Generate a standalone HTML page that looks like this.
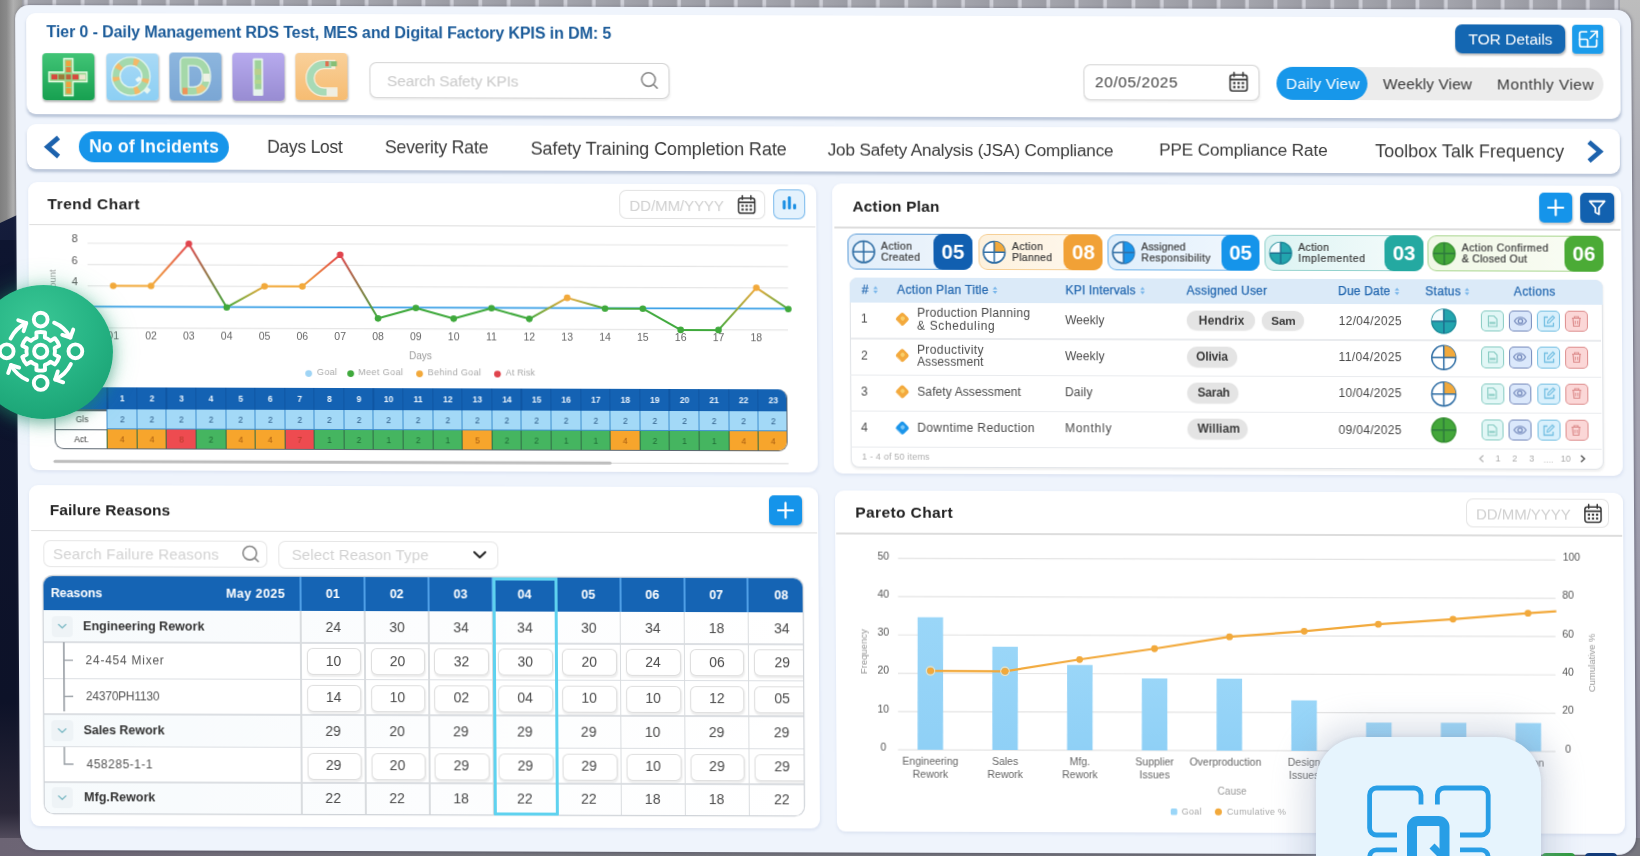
<!DOCTYPE html>
<html><head><meta charset="utf-8"><title>Daily Management</title>
<style>
html,body{margin:0;padding:0}
html{width:1640px;height:856px;overflow:hidden}
body{width:1640px;height:856px;overflow:hidden;position:relative;background:#8a8a90;font-family:"Liberation Sans",sans-serif}
#bg,#fr,#ov{position:absolute;left:0;top:0;width:1640px;height:856px}
#fr{transform-origin:0 0;transform:matrix(1,0.003,0.006,1,0,0);filter:blur(.55px)}
#ov{filter:blur(.55px)}
#bg div,#fr div,#ov div{position:absolute;box-sizing:border-box}
.t{position:absolute;white-space:pre}
svg{position:absolute;left:0;top:0;overflow:visible}
.card{background:#fff;border-radius:9px;box-shadow:0 1px 3px rgba(130,150,190,.16)}
.cs{box-shadow:0 2px 2.5px rgba(115,135,170,.42)}
.hl{background:#dddddd;height:1.3px}
</style></head>
<body>
<div id="bg">
<div style="left:0;top:0;width:1640px;height:14px;background:repeating-linear-gradient(90deg,#a3a4ac 0,#9b9ca4 23px,#cdced6 25px,#cdced6 27px,#a3a4ac 28.4px)"></div>
<div style="left:0;top:0;width:22px;height:230px;background:linear-gradient(90deg,#7f7f7f 0,#8a8a8a 30%,#b0b0b0 60%,#9a9a9a 100%)"></div>
<div style="left:0;top:223px;width:22px;height:633px;background:linear-gradient(180deg,#151d3c 0,#0e1530 20%,#0d1228 70%,#1b1a2c 92%,#6c6474 100%);transform:skewY(-25deg);transform-origin:0 0"></div>
<div style="left:0;top:240px;width:22px;height:616px;background:linear-gradient(180deg,#0e1530 0,#0d1228 75%,#2a2738 93%,#6c6474 100%)"></div>
<div style="left:1620px;top:0;width:20px;height:856px;background:linear-gradient(180deg,#bdbdbd 0,#a9a9b2 20%,#9f9eae 60%,#8b8999 100%)"></div>
<div style="left:0;top:838px;width:1640px;height:18px;background:linear-gradient(90deg,#6c6474 0,#74747c 30%,#77777f 100%)"></div>
</div>
<div id="fr">
<div style="left:14.97px;top:5.46px;width:1616.5px;height:845px;background:#eff4fc;border-radius:14px 14px 18px 20px;box-shadow:0 0 3px rgba(60,60,80,.5)"></div>
<div class="card cs" style="left:25.72px;top:12.52px;width:1594px;height:101.4px;"></div>
<span class="t" style="left:46.36px;top:24.04px;font-size:16px;line-height:16px;color:#1b5b99;font-weight:700;letter-spacing:-0.1px;">Tier 0 - Daily Management RDS Test, MES and Digital Factory KPIS in DM: 5</span>
<div style="left:42.48px;top:52.87px;width:52px;height:47.3px;background:linear-gradient(180deg,#41c476,#17a050);border-radius:4px;box-shadow:0 1px 2px rgba(0,0,0,.25)"><svg width="52" height="47" viewBox="0 0 52 47"><path d="M21.500 5.500h9v13.500h14v9.500h-14v14h-9v-14h-15v-9.500h15z" fill="#93d58c" stroke="#e6fbe2" stroke-width="1.400"/><rect x="23.500" y="7.500" width="5" height="5.500" fill="#f0a23c"/><rect x="23.500" y="14" width="5" height="5" fill="#e07a3c"/><rect x="9" y="21.300" width="6" height="5" fill="#d8483d"/><rect x="16" y="21.300" width="6" height="5" fill="#9a7a3a"/><rect x="23.500" y="21.300" width="5" height="5" fill="#c0603a"/><rect x="30" y="21.300" width="6" height="5" fill="#d8483d"/><rect x="37" y="21.300" width="6" height="5" fill="#ece4cc"/><rect x="23.500" y="28.500" width="5" height="5.500" fill="#efa03c"/><rect x="23.500" y="35" width="5" height="5.500" fill="#e99a3c"/></svg></div>
<div style="left:106.18px;top:52.68px;width:52px;height:47.3px;background:linear-gradient(180deg,#a9d9f5,#8ccff4);border-radius:4px;box-shadow:0 1px 2px rgba(0,0,0,.25)"><svg width="52" height="47" viewBox="0 0 52 47"><path d="M36 33l6.500 5.500" stroke="#e8f6f1" stroke-width="5.500"/><circle cx="24.500" cy="23" r="15" fill="none" stroke="#e3f6ee" stroke-width="9.500"/><circle cx="24.500" cy="23" r="15" fill="none" stroke="#a4d9ad" stroke-width="6.800"/><circle cx="24.500" cy="23" r="15" fill="none" stroke="#f3b868" stroke-width="6.800" stroke-dasharray="5 18 4 9 5 22 4 8 5 200" transform="rotate(-80 24.500 23)"/><path d="M30 27.500l4-3" stroke="#eef8f4" stroke-width="4"/></svg></div>
<div style="left:169.19px;top:52.49px;width:52px;height:47.3px;background:linear-gradient(180deg,#8db6de,#7aa6d4);border-radius:4px;box-shadow:0 1px 2px rgba(0,0,0,.25)"><svg width="52" height="47" viewBox="0 0 52 47"><path d="M15 9h9c8.500 0 13 5.500 13 14.500S32.500 38.500 24 38.500H15z" fill="none" stroke="#e2f3e9" stroke-width="9.500" stroke-linejoin="round"/><path d="M15 9h9c8.500 0 13 5.500 13 14.500S32.500 38.500 24 38.500H15z" fill="none" stroke="#a5d8a9" stroke-width="6.800" stroke-linejoin="round"/><path d="M13 38.500h5" stroke="#f0935a" stroke-width="6.500"/><path d="M27 38c3-.5 5.500-2 7.500-4.500" stroke="#eec37a" stroke-width="6.500" fill="none"/><path d="M37 21v8" stroke="#eef1e4" stroke-width="6.500" fill="none"/></svg></div>
<div style="left:231.89px;top:52.3px;width:52px;height:47.3px;background:linear-gradient(180deg,#b7aaee,#988cd2);border-radius:4px;box-shadow:0 1px 2px rgba(0,0,0,.25)"><svg width="52" height="47" viewBox="0 0 52 47"><rect x="20.500" y="5.500" width="10.200" height="37.500" rx="1" fill="#e6f3ec"/><rect x="22.300" y="7.500" width="6.600" height="29" fill="#9fd29a"/><rect x="22.300" y="16" width="6.600" height="6" fill="#b9cf8c"/><rect x="22.300" y="27" width="6.600" height="4" fill="#b4d68e"/></svg></div>
<div style="left:294.59px;top:52.12px;width:52px;height:47.3px;background:linear-gradient(180deg,#f9d09a,#f6bc72);border-radius:4px;box-shadow:0 1px 2px rgba(0,0,0,.25)"><svg width="52" height="47" viewBox="0 0 52 47"><path d="M40 11.500H28.500a13.800 13.800 0 0 0 0 27.600H42" fill="none" stroke="#f5ecd6" stroke-width="9.500"/><path d="M36 11.500H28.500a13.800 13.800 0 0 0 0 27.600H31" fill="none" stroke="#a7dab6" stroke-width="6.800"/><rect x="31" y="35.700" width="11" height="6.800" fill="#efeee2"/><rect x="30" y="8.300" width="3.500" height="5" fill="#e0704f"/><rect x="35.500" y="8.300" width="6" height="5" fill="#86bf76"/></svg></div>
<div style="left:368.83px;top:60.89px;width:300.2px;height:36.2px;background:#fff;border:1.5px solid #d4d4d4;border-radius:7px;box-shadow:0 1px 2px rgba(0,0,0,.06)"></div>
<span class="t" style="left:386.57px;top:71.57px;font-size:15.5px;line-height:15.5px;color:#c9c9c9;letter-spacing:-0.17px;">Search Safety KPIs</span>
<svg width="1640" height="856"><circle cx="648.03" cy="77.55" r="6.8" fill="none" stroke="#8a8a8a" stroke-width="1.6"/><path d="M653.03 82.55l3.6 3.600" stroke="#8a8a8a" stroke-width="1.600" stroke-linecap="round"/></svg>
<div style="left:1455.18px;top:19.63px;width:109.7px;height:29px;background:#1467b2;border-radius:7px;box-shadow:0 1px 2px rgba(0,0,0,.25)"></div>
<span class="t" style="left:1468.34px;top:27.12px;font-size:15.5px;line-height:15.5px;color:#fff;letter-spacing:-0.01px;">TOR Details</span>
<div style="left:1571.58px;top:19.59px;width:31.9px;height:29px;background:#1b9ceb;border-radius:4px;box-shadow:0 1px 2px rgba(0,0,0,.2)"><svg width="32" height="29" viewBox="0 0 32 29"><g fill="none" stroke="#fff" stroke-width="1.700" stroke-linecap="round" stroke-linejoin="round"><path d="M14.500 7H9.500a2 2 0 0 0-2 2v11a2 2 0 0 0 2 2h13a2 2 0 0 0 2-2v-5"/><path d="M7.500 14.500h6.500a1.500 1.500 0 0 1 1.500 1.500v6"/><path d="M19 6.500h6v6"/><path d="M25 6.500l-7 7"/></g></svg></div>
<div style="left:1082.63px;top:61.05px;width:176.5px;height:36px;background:#fff;border:1.5px solid #d4d4d4;border-radius:7px;box-shadow:0 1px 2px rgba(0,0,0,.06)"></div>
<span class="t" style="left:1094.57px;top:71.24px;font-size:15.5px;line-height:15.5px;color:#444;letter-spacing:0.55px;">20/05/2025</span>
<svg width="1640" height="856"><g transform="translate(1238.13,78.29) scale(1.0)" fill="none" stroke="#383838" stroke-width="1.600"><rect x="-8.500" y="-7" width="17" height="16" rx="2.500"/><path d="M-8.500 -2.500h17" stroke-width="1.8"/><path d="M-4.500 -9.500v4M4.500 -9.500v4" stroke-linecap="round"/><g stroke="none" fill="#383838"><rect x="-5.500" y="0" width="2.400" height="2.200"/><rect x="-1.200" y="0" width="2.400" height="2.200"/><rect x="3.100" y="0" width="2.400" height="2.200"/><rect x="-5.500" y="4" width="2.400" height="2.200"/><rect x="-1.200" y="4" width="2.400" height="2.200"/><rect x="3.100" y="4" width="2.400" height="2.200"/></g></g></svg>
<div style="left:1276.02px;top:62.97px;width:326.6px;height:33px;background:#ececec;border-radius:17px"></div>
<div style="left:1276.02px;top:62.97px;width:91.4px;height:33px;background:#1797ea;border-radius:17px"></div>
<span class="t" style="left:1285.57px;top:71.87px;font-size:15.5px;line-height:15.5px;color:#fff;letter-spacing:0.16px;">Daily View</span>
<span class="t" style="left:1382.57px;top:72.08px;font-size:15.5px;line-height:15.5px;color:#3a3a3a;letter-spacing:0.08px;">Weekly View</span>
<span class="t" style="left:1496.57px;top:72.04px;font-size:15.5px;line-height:15.5px;color:#3a3a3a;letter-spacing:0.42px;">Monthly View</span>
<div class="card cs" style="left:26.26px;top:124.12px;width:1593px;height:45.3px;"></div>
<svg width="1640" height="856"><path d="M57.62 137.35l-11 9.500 11 9.500" fill="none" stroke="#1c62ad" stroke-width="4.800" stroke-linejoin="miter"/></svg>
<div style="left:77.81px;top:131.37px;width:150px;height:30.6px;background:#1695ea;border-radius:16px"></div>
<span class="t" style="left:88.17px;top:138.26px;font-size:17.5px;line-height:17.5px;color:#fff;font-weight:700;letter-spacing:0.24px;">No of Incidents</span>
<span class="t" style="left:266.17px;top:138.23px;font-size:17.5px;line-height:17.5px;color:#3a3a3a;letter-spacing:-0.25px;">Days Lost</span>
<span class="t" style="left:383.97px;top:138.15px;font-size:17.75px;line-height:17.75px;color:#3a3a3a;letter-spacing:-0.25px;">Severity Rate</span>
<span class="t" style="left:529.67px;top:138.18px;font-size:18px;line-height:18px;color:#3a3a3a;letter-spacing:-0.1px;">Safety Training Completion Rate</span>
<span class="t" style="left:826.67px;top:138.57px;font-size:17.25px;line-height:17.25px;color:#3a3a3a;letter-spacing:-0.21px;">Job Safety Analysis (JSA) Compliance</span>
<span class="t" style="left:1158.17px;top:138.47px;font-size:17.25px;line-height:17.25px;color:#3a3a3a;letter-spacing:-0.17px;">PPE Compliance Rate</span>
<span class="t" style="left:1374.17px;top:138.15px;font-size:18px;line-height:18px;color:#3a3a3a;letter-spacing:0.01px;">Toolbox Talk Frequency</span>
<svg width="1640" height="856"><path d="M1588.12 137.22l11 9.500 -11 9.500" fill="none" stroke="#1c62ad" stroke-width="4.800" stroke-linejoin="miter"/></svg>
<div class="card" style="left:26.51px;top:181.92px;width:788.4px;height:288.5px;"></div>
<span class="t" style="left:46.32px;top:195.99px;font-size:15.5px;line-height:15.5px;color:#222;font-weight:700;letter-spacing:0.5px;">Trend Chart</span>
<div class="hl" style="left:27.66px;top:223.72px;width:786.5px;height:1.5px;"></div>
<div style="left:618.37px;top:187.94px;width:145.3px;height:28.8px;background:#fff;border:1.5px solid #e2e2e2;border-radius:7px"></div>
<span class="t" style="left:628.33px;top:195.59px;font-size:15px;line-height:15px;color:#cfcfcf;letter-spacing:-0.06px;">DD/MM/YYYY</span>
<svg width="1640" height="856"><g transform="translate(745.48,202.56) scale(0.95)" fill="none" stroke="#383838" stroke-width="1.600"><rect x="-8.500" y="-7" width="17" height="16" rx="2.500"/><path d="M-8.500 -2.500h17" stroke-width="1.8"/><path d="M-4.500 -9.500v4M4.500 -9.500v4" stroke-linecap="round"/><g stroke="none" fill="#383838"><rect x="-5.500" y="0" width="2.400" height="2.200"/><rect x="-1.200" y="0" width="2.400" height="2.200"/><rect x="3.100" y="0" width="2.400" height="2.200"/><rect x="-5.500" y="4" width="2.400" height="2.200"/><rect x="-1.200" y="4" width="2.400" height="2.200"/><rect x="3.100" y="4" width="2.400" height="2.200"/></g></g></svg>
<div style="left:771.88px;top:187.48px;width:32.6px;height:29.2px;background:#e4f2fd;border:1.5px solid #79b9ec;border-radius:7px"><svg width="30" height="27" viewBox="0 0 30 27"><g fill="#1b8fe3"><rect x="8.500" y="10" width="3" height="9" rx="1.200"/><rect x="13.700" y="6" width="3" height="13" rx="1.200"/><rect x="18.900" y="13.500" width="3" height="5.500" rx="1.200"/></g></svg></div>
<svg width="1640" height="856"><path d="M86.04,243 L786.54,243" stroke="#e6e6e6" stroke-width="1.200"/><path d="M85.91,264.3 L786.41,264.3" stroke="#e6e6e6" stroke-width="1.200"/><path d="M85.79,285.61 L786.29,285.61" stroke="#e6e6e6" stroke-width="1.200"/><path d="M85.53,327.71 L786.03,327.71" stroke="#e6e6e6" stroke-width="1.200"/><path d="M85.66,306.41 L786.16,306.41" stroke="#3aa0e6" stroke-width="1.800"/><defs><linearGradient id="g0" gradientUnits="userSpaceOnUse" x1="111.49" y1="285.56" x2="149.32" y2="285.56"><stop offset="0" stop-color="#f2a93b"/><stop offset="1" stop-color="#f2a93b"/></linearGradient><linearGradient id="g1" gradientUnits="userSpaceOnUse" x1="149.32" y1="285.56" x2="187.4" y2="243.2"><stop offset="0" stop-color="#f2a93b"/><stop offset="1" stop-color="#e0444d"/></linearGradient><linearGradient id="g2" gradientUnits="userSpaceOnUse" x1="187.4" y1="243.2" x2="224.85" y2="306.73"><stop offset="0" stop-color="#e0444d"/><stop offset="1" stop-color="#3fa93c"/></linearGradient><linearGradient id="g3" gradientUnits="userSpaceOnUse" x1="224.85" y1="306.73" x2="262.81" y2="285.56"><stop offset="0" stop-color="#3fa93c"/><stop offset="1" stop-color="#f2a93b"/></linearGradient><linearGradient id="g4" gradientUnits="userSpaceOnUse" x1="262.81" y1="285.56" x2="300.64" y2="285.56"><stop offset="0" stop-color="#f2a93b"/><stop offset="1" stop-color="#f2a93b"/></linearGradient><linearGradient id="g5" gradientUnits="userSpaceOnUse" x1="300.64" y1="285.56" x2="338.66" y2="253.79"><stop offset="0" stop-color="#f2a93b"/><stop offset="1" stop-color="#e0444d"/></linearGradient><linearGradient id="g6" gradientUnits="userSpaceOnUse" x1="338.66" y1="253.79" x2="376.11" y2="317.32"><stop offset="0" stop-color="#e0444d"/><stop offset="1" stop-color="#3fa93c"/></linearGradient><linearGradient id="g7" gradientUnits="userSpaceOnUse" x1="376.11" y1="317.32" x2="414" y2="306.73"><stop offset="0" stop-color="#3fa93c"/><stop offset="1" stop-color="#3fa93c"/></linearGradient><linearGradient id="g8" gradientUnits="userSpaceOnUse" x1="414" y1="306.73" x2="451.77" y2="317.32"><stop offset="0" stop-color="#3fa93c"/><stop offset="1" stop-color="#3fa93c"/></linearGradient><linearGradient id="g9" gradientUnits="userSpaceOnUse" x1="451.77" y1="317.32" x2="489.66" y2="306.73"><stop offset="0" stop-color="#3fa93c"/><stop offset="1" stop-color="#3fa93c"/></linearGradient><linearGradient id="g10" gradientUnits="userSpaceOnUse" x1="489.66" y1="306.73" x2="527.43" y2="317.32"><stop offset="0" stop-color="#3fa93c"/><stop offset="1" stop-color="#3fa93c"/></linearGradient><linearGradient id="g11" gradientUnits="userSpaceOnUse" x1="527.43" y1="317.32" x2="565.38" y2="296.14"><stop offset="0" stop-color="#3fa93c"/><stop offset="1" stop-color="#f2a93b"/></linearGradient><linearGradient id="g12" gradientUnits="userSpaceOnUse" x1="565.38" y1="296.14" x2="603.15" y2="306.73"><stop offset="0" stop-color="#f2a93b"/><stop offset="1" stop-color="#3fa93c"/></linearGradient><linearGradient id="g13" gradientUnits="userSpaceOnUse" x1="603.15" y1="306.73" x2="640.98" y2="306.73"><stop offset="0" stop-color="#3fa93c"/><stop offset="1" stop-color="#3fa93c"/></linearGradient><linearGradient id="g14" gradientUnits="userSpaceOnUse" x1="640.98" y1="306.73" x2="678.68" y2="327.91"><stop offset="0" stop-color="#3fa93c"/><stop offset="1" stop-color="#3fa93c"/></linearGradient><linearGradient id="g15" gradientUnits="userSpaceOnUse" x1="678.68" y1="327.91" x2="716.51" y2="327.91"><stop offset="0" stop-color="#3fa93c"/><stop offset="1" stop-color="#3fa93c"/></linearGradient><linearGradient id="g16" gradientUnits="userSpaceOnUse" x1="716.51" y1="327.91" x2="754.6" y2="285.56"><stop offset="0" stop-color="#3fa93c"/><stop offset="1" stop-color="#f2a93b"/></linearGradient><linearGradient id="g17" gradientUnits="userSpaceOnUse" x1="754.6" y1="285.56" x2="786.46" y2="306.73"><stop offset="0" stop-color="#f2a93b"/><stop offset="1" stop-color="#3fa93c"/></linearGradient></defs><path d="M111.49,285.56 L149.32,285.56" stroke="#f2a93b" stroke-width="2"/><path d="M149.32,285.56 L187.4,243.2" stroke="url(#g1)" stroke-width="2"/><path d="M187.4,243.2 L224.85,306.73" stroke="url(#g2)" stroke-width="2"/><path d="M224.85,306.73 L262.81,285.56" stroke="url(#g3)" stroke-width="2"/><path d="M262.81,285.56 L300.64,285.56" stroke="#f2a93b" stroke-width="2"/><path d="M300.64,285.56 L338.66,253.79" stroke="url(#g5)" stroke-width="2"/><path d="M338.66,253.79 L376.11,317.32" stroke="url(#g6)" stroke-width="2"/><path d="M376.11,317.32 L414,306.73" stroke="url(#g7)" stroke-width="2"/><path d="M414,306.73 L451.77,317.32" stroke="url(#g8)" stroke-width="2"/><path d="M451.77,317.32 L489.66,306.73" stroke="url(#g9)" stroke-width="2"/><path d="M489.66,306.73 L527.43,317.32" stroke="url(#g10)" stroke-width="2"/><path d="M527.43,317.32 L565.38,296.14" stroke="url(#g11)" stroke-width="2"/><path d="M565.38,296.14 L603.15,306.73" stroke="url(#g12)" stroke-width="2"/><path d="M603.15,306.73 L640.98,306.73" stroke="#3fa93c" stroke-width="2"/><path d="M640.98,306.73 L678.68,327.91" stroke="url(#g14)" stroke-width="2"/><path d="M678.68,327.91 L716.51,327.91" stroke="#3fa93c" stroke-width="2"/><path d="M716.51,327.91 L754.6,285.56" stroke="url(#g16)" stroke-width="2"/><path d="M754.6,285.56 L786.46,306.73" stroke="url(#g17)" stroke-width="2"/><circle cx="111.49" cy="285.56" r="3.300" fill="#f2a93b"/><circle cx="149.32" cy="285.56" r="3.300" fill="#f2a93b"/><circle cx="187.4" cy="243.2" r="3.300" fill="#e0444d"/><circle cx="224.85" cy="306.73" r="3.300" fill="#3fa93c"/><circle cx="262.81" cy="285.56" r="3.300" fill="#f2a93b"/><circle cx="300.64" cy="285.56" r="3.300" fill="#f2a93b"/><circle cx="338.66" cy="253.79" r="3.300" fill="#e0444d"/><circle cx="376.11" cy="317.32" r="3.300" fill="#3fa93c"/><circle cx="414" cy="306.73" r="3.300" fill="#3fa93c"/><circle cx="451.77" cy="317.32" r="3.300" fill="#3fa93c"/><circle cx="489.66" cy="306.73" r="3.300" fill="#3fa93c"/><circle cx="527.43" cy="317.32" r="3.300" fill="#3fa93c"/><circle cx="565.38" cy="296.14" r="3.300" fill="#f2a93b"/><circle cx="603.15" cy="306.73" r="3.300" fill="#3fa93c"/><circle cx="640.98" cy="306.73" r="3.300" fill="#3fa93c"/><circle cx="678.68" cy="327.91" r="3.300" fill="#3fa93c"/><circle cx="716.51" cy="327.91" r="3.300" fill="#3fa93c"/><circle cx="754.6" cy="285.56" r="3.300" fill="#f2a93b"/><circle cx="786.46" cy="306.73" r="3.300" fill="#3fa93c"/><circle cx="306.46" cy="372.61" r="3.400" fill="#9fd4f5"/><circle cx="348.46" cy="372.61" r="3.400" fill="#3fa93c"/><circle cx="417.36" cy="372.61" r="3.400" fill="#f2a93b"/><circle cx="495.26" cy="372.61" r="3.400" fill="#e0444d"/><path d="M52.23,461.34 L785.73,461.34" stroke="#dedede" stroke-width="1.400"/><path d="M52.23,461.34 L607.23,461.34" stroke="#bdbdbd" stroke-width="3" stroke-linecap="round"/></svg>
<span class="t" style="left:70.14px;top:233.27px;font-size:11px;line-height:11px;color:#555;">8</span>
<span class="t" style="left:70.01px;top:254.57px;font-size:11px;line-height:11px;color:#555;">6</span>
<span class="t" style="left:69.88px;top:275.87px;font-size:11px;line-height:11px;color:#555;">4</span>
<span class="t" style="left:50.91px;top:281.85px;font-size:9.5px;line-height:10px;color:#9a9a9a;transform:translate(-50%,-50%) rotate(-90deg)">Count</span>
<span class="t" style="left:105.37px;top:330.32px;font-size:10.5px;line-height:10.5px;color:#666;">01</span>
<span class="t" style="left:143.2px;top:330.32px;font-size:10.5px;line-height:10.5px;color:#666;">02</span>
<span class="t" style="left:181.03px;top:330.32px;font-size:10.5px;line-height:10.5px;color:#666;">03</span>
<span class="t" style="left:218.86px;top:330.32px;font-size:10.5px;line-height:10.5px;color:#666;">04</span>
<span class="t" style="left:256.69px;top:330.32px;font-size:10.5px;line-height:10.5px;color:#666;">05</span>
<span class="t" style="left:294.52px;top:330.32px;font-size:10.5px;line-height:10.5px;color:#666;">06</span>
<span class="t" style="left:332.35px;top:330.32px;font-size:10.5px;line-height:10.5px;color:#666;">07</span>
<span class="t" style="left:370.18px;top:330.32px;font-size:10.5px;line-height:10.5px;color:#666;">08</span>
<span class="t" style="left:408.01px;top:330.32px;font-size:10.5px;line-height:10.5px;color:#666;">09</span>
<span class="t" style="left:445.84px;top:330.32px;font-size:10.5px;line-height:10.5px;color:#666;">10</span>
<span class="t" style="left:484.06px;top:330.32px;font-size:10.5px;line-height:10.5px;color:#666;">11</span>
<span class="t" style="left:521.5px;top:330.32px;font-size:10.5px;line-height:10.5px;color:#666;">12</span>
<span class="t" style="left:559.33px;top:330.32px;font-size:10.5px;line-height:10.5px;color:#666;">13</span>
<span class="t" style="left:597.16px;top:330.32px;font-size:10.5px;line-height:10.5px;color:#666;">14</span>
<span class="t" style="left:634.99px;top:330.32px;font-size:10.5px;line-height:10.5px;color:#666;">15</span>
<span class="t" style="left:672.82px;top:330.32px;font-size:10.5px;line-height:10.5px;color:#666;">16</span>
<span class="t" style="left:710.65px;top:330.32px;font-size:10.5px;line-height:10.5px;color:#666;">17</span>
<span class="t" style="left:748.48px;top:330.32px;font-size:10.5px;line-height:10.5px;color:#666;">18</span>
<span class="t" style="left:407px;top:350.06px;font-size:10px;line-height:10px;color:#999;">Days</span>
<span class="t" style="left:314.8px;top:367.34px;font-size:9px;line-height:9px;color:#a8a8a8;letter-spacing:0.33px;">Goal</span>
<span class="t" style="left:356px;top:367.42px;font-size:9px;line-height:9px;color:#a8a8a8;letter-spacing:0.41px;">Meet Goal</span>
<span class="t" style="left:425.6px;top:367.41px;font-size:9px;line-height:9px;color:#a8a8a8;letter-spacing:0.37px;">Behind Goal</span>
<span class="t" style="left:503.6px;top:367.38px;font-size:9px;line-height:9px;color:#a8a8a8;letter-spacing:0.11px;">At Risk</span>
<div style="left:52.18px;top:387.04px;width:733.1px;height:62.2px;border-radius:0 9px 9px 9px;overflow:hidden;background:#fff;border:1.5px solid #5c6670;border-top:none"><div style="left:-1.5px;top:0;width:733.1px;height:22.4px;background:#1462b3"></div><div style="left:-1.5px;top:22.4px;width:52.5px;height:1.5px;background:#5c6670"></div><div style="left:-1.5px;top:41.7px;width:52.5px;height:1.5px;background:#5c6670"></div><div style="left:51px;top:22.4px;width:29.59px;height:20px;background:#a3d9f7;border-left:1.4px solid #3f8fcf;border-bottom:1.400px solid #3f8fcf"></div><div style="left:51px;top:42.4px;width:29.59px;height:19.8px;background:#f7a52c;border-left:1.4px solid #2f6b45"></div><div style="left:80.59px;top:22.4px;width:29.59px;height:20px;background:#a3d9f7;border-left:1.4px solid #3f8fcf;border-bottom:1.400px solid #3f8fcf"></div><div style="left:80.59px;top:42.4px;width:29.59px;height:19.8px;background:#f7a52c;border-left:1.4px solid #2f6b45"></div><div style="left:80.59px;top:0;width:1.2px;height:22.4px;background:#0f56a3"></div><div style="left:110.18px;top:22.4px;width:29.59px;height:20px;background:#a3d9f7;border-left:1.4px solid #3f8fcf;border-bottom:1.400px solid #3f8fcf"></div><div style="left:110.18px;top:42.4px;width:29.59px;height:19.8px;background:#ee4b50;border-left:1.4px solid #2f6b45"></div><div style="left:110.18px;top:0;width:1.2px;height:22.4px;background:#0f56a3"></div><div style="left:139.77px;top:22.4px;width:29.59px;height:20px;background:#a3d9f7;border-left:1.4px solid #3f8fcf;border-bottom:1.400px solid #3f8fcf"></div><div style="left:139.77px;top:42.4px;width:29.59px;height:19.8px;background:#45b560;border-left:1.4px solid #2f6b45"></div><div style="left:139.77px;top:0;width:1.2px;height:22.4px;background:#0f56a3"></div><div style="left:169.37px;top:22.4px;width:29.59px;height:20px;background:#a3d9f7;border-left:1.4px solid #3f8fcf;border-bottom:1.400px solid #3f8fcf"></div><div style="left:169.37px;top:42.4px;width:29.59px;height:19.8px;background:#f7a52c;border-left:1.4px solid #2f6b45"></div><div style="left:169.37px;top:0;width:1.2px;height:22.4px;background:#0f56a3"></div><div style="left:198.96px;top:22.4px;width:29.59px;height:20px;background:#a3d9f7;border-left:1.4px solid #3f8fcf;border-bottom:1.400px solid #3f8fcf"></div><div style="left:198.96px;top:42.4px;width:29.59px;height:19.8px;background:#f7a52c;border-left:1.4px solid #2f6b45"></div><div style="left:198.96px;top:0;width:1.2px;height:22.4px;background:#0f56a3"></div><div style="left:228.55px;top:22.4px;width:29.59px;height:20px;background:#a3d9f7;border-left:1.4px solid #3f8fcf;border-bottom:1.400px solid #3f8fcf"></div><div style="left:228.55px;top:42.4px;width:29.59px;height:19.8px;background:#ee4b50;border-left:1.4px solid #2f6b45"></div><div style="left:228.55px;top:0;width:1.2px;height:22.4px;background:#0f56a3"></div><div style="left:258.14px;top:22.4px;width:29.59px;height:20px;background:#a3d9f7;border-left:1.4px solid #3f8fcf;border-bottom:1.400px solid #3f8fcf"></div><div style="left:258.14px;top:42.4px;width:29.59px;height:19.8px;background:#45b560;border-left:1.4px solid #2f6b45"></div><div style="left:258.14px;top:0;width:1.2px;height:22.4px;background:#0f56a3"></div><div style="left:287.73px;top:22.4px;width:29.59px;height:20px;background:#a3d9f7;border-left:1.4px solid #3f8fcf;border-bottom:1.400px solid #3f8fcf"></div><div style="left:287.73px;top:42.4px;width:29.59px;height:19.8px;background:#45b560;border-left:1.4px solid #2f6b45"></div><div style="left:287.73px;top:0;width:1.2px;height:22.4px;background:#0f56a3"></div><div style="left:317.32px;top:22.4px;width:29.59px;height:20px;background:#a3d9f7;border-left:1.4px solid #3f8fcf;border-bottom:1.400px solid #3f8fcf"></div><div style="left:317.32px;top:42.4px;width:29.59px;height:19.8px;background:#45b560;border-left:1.4px solid #2f6b45"></div><div style="left:317.32px;top:0;width:1.2px;height:22.4px;background:#0f56a3"></div><div style="left:346.91px;top:22.4px;width:29.59px;height:20px;background:#a3d9f7;border-left:1.4px solid #3f8fcf;border-bottom:1.400px solid #3f8fcf"></div><div style="left:346.91px;top:42.4px;width:29.59px;height:19.8px;background:#45b560;border-left:1.4px solid #2f6b45"></div><div style="left:346.91px;top:0;width:1.2px;height:22.4px;background:#0f56a3"></div><div style="left:376.5px;top:22.4px;width:29.59px;height:20px;background:#a3d9f7;border-left:1.4px solid #3f8fcf;border-bottom:1.400px solid #3f8fcf"></div><div style="left:376.5px;top:42.4px;width:29.59px;height:19.8px;background:#45b560;border-left:1.4px solid #2f6b45"></div><div style="left:376.5px;top:0;width:1.2px;height:22.4px;background:#0f56a3"></div><div style="left:406.1px;top:22.4px;width:29.59px;height:20px;background:#a3d9f7;border-left:1.4px solid #3f8fcf;border-bottom:1.400px solid #3f8fcf"></div><div style="left:406.1px;top:42.4px;width:29.59px;height:19.8px;background:#f7a52c;border-left:1.4px solid #2f6b45"></div><div style="left:406.1px;top:0;width:1.2px;height:22.4px;background:#0f56a3"></div><div style="left:435.69px;top:22.4px;width:29.59px;height:20px;background:#a3d9f7;border-left:1.4px solid #3f8fcf;border-bottom:1.400px solid #3f8fcf"></div><div style="left:435.69px;top:42.4px;width:29.59px;height:19.8px;background:#45b560;border-left:1.4px solid #2f6b45"></div><div style="left:435.69px;top:0;width:1.2px;height:22.4px;background:#0f56a3"></div><div style="left:465.28px;top:22.4px;width:29.59px;height:20px;background:#a3d9f7;border-left:1.4px solid #3f8fcf;border-bottom:1.400px solid #3f8fcf"></div><div style="left:465.28px;top:42.4px;width:29.59px;height:19.8px;background:#45b560;border-left:1.4px solid #2f6b45"></div><div style="left:465.28px;top:0;width:1.2px;height:22.4px;background:#0f56a3"></div><div style="left:494.87px;top:22.4px;width:29.59px;height:20px;background:#a3d9f7;border-left:1.4px solid #3f8fcf;border-bottom:1.400px solid #3f8fcf"></div><div style="left:494.87px;top:42.4px;width:29.59px;height:19.8px;background:#45b560;border-left:1.4px solid #2f6b45"></div><div style="left:494.87px;top:0;width:1.2px;height:22.4px;background:#0f56a3"></div><div style="left:524.46px;top:22.4px;width:29.59px;height:20px;background:#a3d9f7;border-left:1.4px solid #3f8fcf;border-bottom:1.400px solid #3f8fcf"></div><div style="left:524.46px;top:42.4px;width:29.59px;height:19.8px;background:#45b560;border-left:1.4px solid #2f6b45"></div><div style="left:524.46px;top:0;width:1.2px;height:22.4px;background:#0f56a3"></div><div style="left:554.05px;top:22.4px;width:29.59px;height:20px;background:#a3d9f7;border-left:1.4px solid #3f8fcf;border-bottom:1.400px solid #3f8fcf"></div><div style="left:554.05px;top:42.4px;width:29.59px;height:19.8px;background:#f7a52c;border-left:1.4px solid #2f6b45"></div><div style="left:554.05px;top:0;width:1.2px;height:22.4px;background:#0f56a3"></div><div style="left:583.64px;top:22.4px;width:29.59px;height:20px;background:#a3d9f7;border-left:1.4px solid #3f8fcf;border-bottom:1.400px solid #3f8fcf"></div><div style="left:583.64px;top:42.4px;width:29.59px;height:19.8px;background:#45b560;border-left:1.4px solid #2f6b45"></div><div style="left:583.64px;top:0;width:1.2px;height:22.4px;background:#0f56a3"></div><div style="left:613.23px;top:22.4px;width:29.59px;height:20px;background:#a3d9f7;border-left:1.4px solid #3f8fcf;border-bottom:1.400px solid #3f8fcf"></div><div style="left:613.23px;top:42.4px;width:29.59px;height:19.8px;background:#45b560;border-left:1.4px solid #2f6b45"></div><div style="left:613.23px;top:0;width:1.2px;height:22.4px;background:#0f56a3"></div><div style="left:642.83px;top:22.4px;width:29.59px;height:20px;background:#a3d9f7;border-left:1.4px solid #3f8fcf;border-bottom:1.400px solid #3f8fcf"></div><div style="left:642.83px;top:42.4px;width:29.59px;height:19.8px;background:#45b560;border-left:1.4px solid #2f6b45"></div><div style="left:642.83px;top:0;width:1.2px;height:22.4px;background:#0f56a3"></div><div style="left:672.42px;top:22.4px;width:29.59px;height:20px;background:#a3d9f7;border-left:1.4px solid #3f8fcf;border-bottom:1.400px solid #3f8fcf"></div><div style="left:672.42px;top:42.4px;width:29.59px;height:19.8px;background:#f7a52c;border-left:1.4px solid #2f6b45"></div><div style="left:672.42px;top:0;width:1.2px;height:22.4px;background:#0f56a3"></div><div style="left:702.01px;top:22.4px;width:29.59px;height:20px;background:#a3d9f7;border-left:1.4px solid #3f8fcf;border-bottom:1.400px solid #3f8fcf"></div><div style="left:702.01px;top:42.4px;width:29.59px;height:19.8px;background:#f7a52c;border-left:1.4px solid #2f6b45"></div><div style="left:702.01px;top:0;width:1.2px;height:22.4px;background:#0f56a3"></div><div style="left:51px;top:0;width:1.4px;height:22.4px;background:#0f4f98"></div></div>
<span class="t" style="left:117.56px;top:394.19px;font-size:8.5px;line-height:8.5px;color:#e8f2fb;font-weight:700;">1</span>
<span class="t" style="left:117.44px;top:415.39px;font-size:8.5px;line-height:8.5px;color:#2c5a85;">2</span>
<span class="t" style="left:117.32px;top:435.39px;font-size:8.5px;line-height:8.5px;color:#a55a10;">4</span>
<span class="t" style="left:147.15px;top:394.19px;font-size:8.5px;line-height:8.5px;color:#e8f2fb;font-weight:700;">2</span>
<span class="t" style="left:147.03px;top:415.39px;font-size:8.5px;line-height:8.5px;color:#2c5a85;">2</span>
<span class="t" style="left:146.91px;top:435.39px;font-size:8.5px;line-height:8.5px;color:#a55a10;">4</span>
<span class="t" style="left:176.75px;top:394.19px;font-size:8.5px;line-height:8.5px;color:#e8f2fb;font-weight:700;">3</span>
<span class="t" style="left:176.62px;top:415.39px;font-size:8.5px;line-height:8.5px;color:#2c5a85;">2</span>
<span class="t" style="left:176.5px;top:435.39px;font-size:8.5px;line-height:8.5px;color:#b23a2a;">8</span>
<span class="t" style="left:206.34px;top:394.19px;font-size:8.5px;line-height:8.5px;color:#e8f2fb;font-weight:700;">4</span>
<span class="t" style="left:206.21px;top:415.39px;font-size:8.5px;line-height:8.5px;color:#2c5a85;">2</span>
<span class="t" style="left:206.09px;top:435.39px;font-size:8.5px;line-height:8.5px;color:#1f6b36;">2</span>
<span class="t" style="left:235.93px;top:394.19px;font-size:8.5px;line-height:8.5px;color:#e8f2fb;font-weight:700;">5</span>
<span class="t" style="left:235.8px;top:415.39px;font-size:8.5px;line-height:8.5px;color:#2c5a85;">2</span>
<span class="t" style="left:235.68px;top:435.39px;font-size:8.5px;line-height:8.5px;color:#a55a10;">4</span>
<span class="t" style="left:265.52px;top:394.19px;font-size:8.5px;line-height:8.5px;color:#e8f2fb;font-weight:700;">6</span>
<span class="t" style="left:265.39px;top:415.39px;font-size:8.5px;line-height:8.5px;color:#2c5a85;">2</span>
<span class="t" style="left:265.27px;top:435.39px;font-size:8.5px;line-height:8.5px;color:#a55a10;">4</span>
<span class="t" style="left:295.11px;top:394.19px;font-size:8.5px;line-height:8.5px;color:#e8f2fb;font-weight:700;">7</span>
<span class="t" style="left:294.98px;top:415.39px;font-size:8.5px;line-height:8.5px;color:#2c5a85;">2</span>
<span class="t" style="left:294.86px;top:435.39px;font-size:8.5px;line-height:8.5px;color:#b23a2a;">7</span>
<span class="t" style="left:324.7px;top:394.19px;font-size:8.5px;line-height:8.5px;color:#e8f2fb;font-weight:700;">8</span>
<span class="t" style="left:324.58px;top:415.39px;font-size:8.5px;line-height:8.5px;color:#2c5a85;">2</span>
<span class="t" style="left:324.46px;top:435.39px;font-size:8.5px;line-height:8.5px;color:#1f6b36;">1</span>
<span class="t" style="left:354.29px;top:394.19px;font-size:8.5px;line-height:8.5px;color:#e8f2fb;font-weight:700;">9</span>
<span class="t" style="left:354.17px;top:415.39px;font-size:8.5px;line-height:8.5px;color:#2c5a85;">2</span>
<span class="t" style="left:354.05px;top:435.39px;font-size:8.5px;line-height:8.5px;color:#1f6b36;">2</span>
<span class="t" style="left:381.52px;top:394.19px;font-size:8.5px;line-height:8.5px;color:#e8f2fb;font-weight:700;">10</span>
<span class="t" style="left:383.76px;top:415.39px;font-size:8.5px;line-height:8.5px;color:#2c5a85;">2</span>
<span class="t" style="left:383.64px;top:435.39px;font-size:8.5px;line-height:8.5px;color:#1f6b36;">1</span>
<span class="t" style="left:411.34px;top:394.19px;font-size:8.5px;line-height:8.5px;color:#e8f2fb;font-weight:700;">11</span>
<span class="t" style="left:413.35px;top:415.39px;font-size:8.5px;line-height:8.5px;color:#2c5a85;">2</span>
<span class="t" style="left:413.23px;top:435.39px;font-size:8.5px;line-height:8.5px;color:#1f6b36;">2</span>
<span class="t" style="left:440.7px;top:394.19px;font-size:8.5px;line-height:8.5px;color:#e8f2fb;font-weight:700;">12</span>
<span class="t" style="left:442.94px;top:415.39px;font-size:8.5px;line-height:8.5px;color:#2c5a85;">2</span>
<span class="t" style="left:442.82px;top:435.39px;font-size:8.5px;line-height:8.5px;color:#1f6b36;">1</span>
<span class="t" style="left:470.29px;top:394.19px;font-size:8.5px;line-height:8.5px;color:#e8f2fb;font-weight:700;">13</span>
<span class="t" style="left:472.53px;top:415.39px;font-size:8.5px;line-height:8.5px;color:#2c5a85;">2</span>
<span class="t" style="left:472.41px;top:435.39px;font-size:8.5px;line-height:8.5px;color:#a55a10;">5</span>
<span class="t" style="left:499.88px;top:394.19px;font-size:8.5px;line-height:8.5px;color:#e8f2fb;font-weight:700;">14</span>
<span class="t" style="left:502.12px;top:415.39px;font-size:8.5px;line-height:8.5px;color:#2c5a85;">2</span>
<span class="t" style="left:502px;top:435.39px;font-size:8.5px;line-height:8.5px;color:#1f6b36;">2</span>
<span class="t" style="left:529.47px;top:394.19px;font-size:8.5px;line-height:8.5px;color:#e8f2fb;font-weight:700;">15</span>
<span class="t" style="left:531.71px;top:415.39px;font-size:8.5px;line-height:8.5px;color:#2c5a85;">2</span>
<span class="t" style="left:531.59px;top:435.39px;font-size:8.5px;line-height:8.5px;color:#1f6b36;">2</span>
<span class="t" style="left:559.07px;top:394.19px;font-size:8.5px;line-height:8.5px;color:#e8f2fb;font-weight:700;">16</span>
<span class="t" style="left:561.31px;top:415.39px;font-size:8.5px;line-height:8.5px;color:#2c5a85;">2</span>
<span class="t" style="left:561.19px;top:435.39px;font-size:8.5px;line-height:8.5px;color:#1f6b36;">1</span>
<span class="t" style="left:588.66px;top:394.19px;font-size:8.5px;line-height:8.5px;color:#e8f2fb;font-weight:700;">17</span>
<span class="t" style="left:590.9px;top:415.39px;font-size:8.5px;line-height:8.5px;color:#2c5a85;">2</span>
<span class="t" style="left:590.78px;top:435.39px;font-size:8.5px;line-height:8.5px;color:#1f6b36;">1</span>
<span class="t" style="left:618.25px;top:394.19px;font-size:8.5px;line-height:8.5px;color:#e8f2fb;font-weight:700;">18</span>
<span class="t" style="left:620.49px;top:415.39px;font-size:8.5px;line-height:8.5px;color:#2c5a85;">2</span>
<span class="t" style="left:620.37px;top:435.39px;font-size:8.5px;line-height:8.5px;color:#a55a10;">4</span>
<span class="t" style="left:647.84px;top:394.19px;font-size:8.5px;line-height:8.5px;color:#e8f2fb;font-weight:700;">19</span>
<span class="t" style="left:650.08px;top:415.39px;font-size:8.5px;line-height:8.5px;color:#2c5a85;">2</span>
<span class="t" style="left:649.96px;top:435.39px;font-size:8.5px;line-height:8.5px;color:#1f6b36;">2</span>
<span class="t" style="left:677.43px;top:394.19px;font-size:8.5px;line-height:8.5px;color:#e8f2fb;font-weight:700;">20</span>
<span class="t" style="left:679.67px;top:415.39px;font-size:8.5px;line-height:8.5px;color:#2c5a85;">2</span>
<span class="t" style="left:679.55px;top:435.39px;font-size:8.5px;line-height:8.5px;color:#1f6b36;">1</span>
<span class="t" style="left:707.02px;top:394.19px;font-size:8.5px;line-height:8.5px;color:#e8f2fb;font-weight:700;">21</span>
<span class="t" style="left:709.26px;top:415.39px;font-size:8.5px;line-height:8.5px;color:#2c5a85;">2</span>
<span class="t" style="left:709.14px;top:435.39px;font-size:8.5px;line-height:8.5px;color:#1f6b36;">1</span>
<span class="t" style="left:736.61px;top:394.19px;font-size:8.5px;line-height:8.5px;color:#e8f2fb;font-weight:700;">22</span>
<span class="t" style="left:738.85px;top:415.39px;font-size:8.5px;line-height:8.5px;color:#2c5a85;">2</span>
<span class="t" style="left:738.73px;top:435.39px;font-size:8.5px;line-height:8.5px;color:#a55a10;">4</span>
<span class="t" style="left:766.2px;top:394.19px;font-size:8.5px;line-height:8.5px;color:#e8f2fb;font-weight:700;">23</span>
<span class="t" style="left:768.44px;top:415.39px;font-size:8.5px;line-height:8.5px;color:#2c5a85;">2</span>
<span class="t" style="left:768.32px;top:435.39px;font-size:8.5px;line-height:8.5px;color:#a55a10;">4</span>
<span class="t" style="left:73.13px;top:415.02px;font-size:8.5px;line-height:8.5px;color:#444;">Gls</span>
<span class="t" style="left:71.56px;top:434.82px;font-size:8.5px;line-height:8.5px;color:#333;">Act.</span>
<div class="card" style="left:831.41px;top:181.31px;width:788.5px;height:290.2px;"></div>
<span class="t" style="left:851.13px;top:195.67px;font-size:15.5px;line-height:15.5px;color:#222;font-weight:700;letter-spacing:0.19px;">Action Plan</span>
<div class="hl" style="left:832.66px;top:224px;width:786.5px;height:1.5px;"></div>
<div style="left:1538.07px;top:187.59px;width:33.4px;height:30px;background:#1594ea;border-radius:5px;box-shadow:0 1px 2px rgba(0,0,0,.2)"><svg width="33" height="30" viewBox="0 0 33 30"><path d="M16.500 7.500v15M9 15h15" stroke="#fff" stroke-width="2.200" stroke-linecap="round"/></svg></div>
<div style="left:1578.87px;top:187.66px;width:33.8px;height:30px;background:#1261af;border-radius:5px;box-shadow:0 1px 2px rgba(0,0,0,.2)"><svg width="34" height="30" viewBox="0 0 34 30"><path d="M9.500 8.500h15l-5.700 6.500v6.500l-3.600-2v-4.500z" fill="none" stroke="#fff" stroke-width="1.800" stroke-linejoin="round"/></svg></div>
<div style="left:846.11px;top:231.16px;width:124.5px;height:35.8px;background:linear-gradient(90deg,#e2eefa,#eef5fc);border:1.5px solid #5f9ed8;border-radius:9px"></div>
<div style="left:931.82px;top:230.6px;width:39.1px;height:36.4px;background:#115fb0;border-radius:9px"></div>
<span class="t" style="left:940.06px;top:238.8px;font-size:20.5px;line-height:20.5px;color:#fff;font-weight:700;">05</span>
<svg width="1640" height="856"><g transform="translate(862.2,249.21)"><circle r="10.8" fill="#eef6fd" stroke="#2e6da4" stroke-width="1.500"/><path d="M-10.8 0H10.8M0 -10.8V10.8" stroke="#2e6da4" stroke-width="1.500"/></g></svg>
<span class="t" style="left:879.57px;top:238.3px;font-size:10.5px;line-height:10.5px;color:#3a3a3a;letter-spacing:0.36px;-webkit-text-stroke:.2px #3a3a3a;">Action</span>
<span class="t" style="left:879.51px;top:249.1px;font-size:10.5px;line-height:10.5px;color:#3a3a3a;letter-spacing:0.27px;-webkit-text-stroke:.2px #3a3a3a;">Created</span>
<div style="left:976.61px;top:231.17px;width:124.5px;height:35.8px;background:linear-gradient(90deg,#fdf1dd,#fef8ee);border:1.5px solid #f6cf95;border-radius:9px"></div>
<div style="left:1062.32px;top:230.61px;width:39.1px;height:36.4px;background:#f1a136;border-radius:9px"></div>
<span class="t" style="left:1070.56px;top:238.81px;font-size:20.5px;line-height:20.5px;color:#fff;font-weight:700;">08</span>
<svg width="1640" height="856"><g transform="translate(992.7,249.22)"><circle r="10.8" fill="#fff" stroke="#2e6da4" stroke-width="1.500"/><path d="M0 0V-10.8A10.8 10.8 0 0 1 10.8 0z" fill="#f2a93b"/><path d="M-10.8 0H10.8M0 -10.8V10.8" stroke="#2e6da4" stroke-width="1.500"/></g></svg>
<span class="t" style="left:1010.57px;top:238.3px;font-size:10.5px;line-height:10.5px;color:#3a3a3a;letter-spacing:0.36px;-webkit-text-stroke:.2px #3a3a3a;">Action</span>
<span class="t" style="left:1010.51px;top:249.1px;font-size:10.5px;line-height:10.5px;color:#3a3a3a;letter-spacing:0.24px;-webkit-text-stroke:.2px #3a3a3a;">Planned</span>
<div style="left:1106.21px;top:231.18px;width:151.6px;height:35.8px;background:linear-gradient(90deg,#dfeefb,#f2f8fe);border:1.5px solid #6fb3ea;border-radius:9px"></div>
<div style="left:1219.82px;top:230.54px;width:38.3px;height:36.4px;background:#1594ea;border-radius:9px"></div>
<span class="t" style="left:1227.66px;top:238.74px;font-size:20.5px;line-height:20.5px;color:#fff;font-weight:700;">05</span>
<svg width="1640" height="856"><g transform="translate(1122,249.23)"><circle r="10.8" fill="#eef6fd" stroke="#2e6da4" stroke-width="1.500"/><path d="M0 -10.8A10.8 10.8 0 0 1 0 10.8z" fill="#1b95ea"/><path d="M-10.8 0H10.8M0 -10.8V10.8" stroke="#2e6da4" stroke-width="1.500"/></g></svg>
<span class="t" style="left:1139.77px;top:238.31px;font-size:10.5px;line-height:10.5px;color:#3a3a3a;letter-spacing:0.16px;-webkit-text-stroke:.2px #3a3a3a;">Assigned</span>
<span class="t" style="left:1139.71px;top:249.12px;font-size:10.5px;line-height:10.5px;color:#3a3a3a;letter-spacing:0.35px;-webkit-text-stroke:.2px #3a3a3a;">Responsibility</span>
<div style="left:1263.11px;top:231.21px;width:158.7px;height:35.8px;background:linear-gradient(90deg,#dcf3f2,#f6fcfc);border:1.5px solid #93d2cd;border-radius:9px"></div>
<div style="left:1382.82px;top:230.55px;width:39.3px;height:36.4px;background:#24a9a1;border-radius:9px"></div>
<span class="t" style="left:1391.16px;top:238.75px;font-size:20.5px;line-height:20.5px;color:#fff;font-weight:700;">03</span>
<svg width="1640" height="856"><g transform="translate(1279.2,249.26)"><circle r="10.8" fill="#22a5ae" stroke="#1f8f9c" stroke-width="1.500"/><path d="M0 0V-10.8A10.8 10.8 0 0 0 -10.8 0z" fill="#f4fbfd"/><path d="M-10.8 0H10.8M0 -10.8V10.8" stroke="#1d6f8f" stroke-width="1.500"/></g></svg>
<span class="t" style="left:1296.77px;top:238.34px;font-size:10.5px;line-height:10.5px;color:#3a3a3a;letter-spacing:0.32px;-webkit-text-stroke:.2px #3a3a3a;">Action</span>
<span class="t" style="left:1296.71px;top:249.14px;font-size:10.5px;line-height:10.5px;color:#3a3a3a;letter-spacing:0.61px;-webkit-text-stroke:.2px #3a3a3a;">Implemented</span>
<div style="left:1426.21px;top:231.32px;width:175.4px;height:35.8px;background:linear-gradient(90deg,#f0f8e6,#fbfdf6);border:1.5px solid #a9d68f;border-radius:9px"></div>
<div style="left:1562.82px;top:230.61px;width:39.1px;height:36.4px;background:#4bab36;border-radius:9px"></div>
<span class="t" style="left:1571.06px;top:238.81px;font-size:20.5px;line-height:20.5px;color:#fff;font-weight:700;">06</span>
<svg width="1640" height="856"><g transform="translate(1442.7,249.37)"><circle r="10.8" fill="#43a73a" stroke="#3a9433" stroke-width="1.500"/><path d="M-10.8 0H10.8M0 -10.8V10.8" stroke="#2d7a3c" stroke-width="1.500"/></g></svg>
<span class="t" style="left:1460.27px;top:238.45px;font-size:10.5px;line-height:10.5px;color:#3a3a3a;letter-spacing:0.4px;-webkit-text-stroke:.2px #3a3a3a;">Action Confirmed</span>
<span class="t" style="left:1460.2px;top:249.25px;font-size:10.5px;line-height:10.5px;color:#3a3a3a;letter-spacing:0.26px;-webkit-text-stroke:.2px #3a3a3a;">&amp; Closed Out</span>
<div style="left:847.95px;top:274.66px;width:752.7px;height:190.2px;background:#fff;border:1.2px solid #e1e4e8;border-radius:8px;box-shadow:0 1px 2px rgba(0,0,0,.06)"></div>
<div style="left:847.95px;top:274.66px;width:752.7px;height:25px;background:#dbeaf8;border-radius:8px 8px 0 0"></div>
<span class="t" style="left:860.01px;top:281.04px;font-size:12px;line-height:12px;color:#2468b0;letter-spacing:0.41px;-webkit-text-stroke:.25px #2468b0;">#</span>
<span class="t" style="left:895.31px;top:281.04px;font-size:12px;line-height:12px;color:#2468b0;letter-spacing:0.34px;-webkit-text-stroke:.25px #2468b0;">Action Plan Title</span>
<span class="t" style="left:1063.81px;top:281.04px;font-size:12px;line-height:12px;color:#2468b0;letter-spacing:0.16px;-webkit-text-stroke:.25px #2468b0;">KPI Intervals</span>
<span class="t" style="left:1184.81px;top:281.04px;font-size:12px;line-height:12px;color:#2468b0;letter-spacing:0.2px;-webkit-text-stroke:.25px #2468b0;">Assigned User</span>
<span class="t" style="left:1336.31px;top:281.04px;font-size:12px;line-height:12px;color:#2468b0;letter-spacing:0.19px;-webkit-text-stroke:.25px #2468b0;">Due Date</span>
<span class="t" style="left:1423.51px;top:281.04px;font-size:12px;line-height:12px;color:#2468b0;letter-spacing:0.31px;-webkit-text-stroke:.25px #2468b0;">Status</span>
<span class="t" style="left:1512.01px;top:281.04px;font-size:12px;line-height:12px;color:#2468b0;letter-spacing:0.37px;-webkit-text-stroke:.25px #2468b0;">Actions</span>
<svg width="1640" height="856"><path d="M871.48 286.46l2.300-3 2.300 3zM871.48 288.06l2.300 3 2.300-3z" fill="#79b6ea"/><path d="M990.98 286.46l2.300-3 2.300 3zM990.98 288.06l2.300 3 2.300-3z" fill="#79b6ea"/><path d="M1138.48 286.46l2.300-3 2.300 3zM1138.48 288.06l2.300 3 2.300-3z" fill="#79b6ea"/><path d="M1392.98 286.46l2.300-3 2.300 3zM1392.98 288.06l2.300 3 2.300-3z" fill="#79b6ea"/><path d="M1462.98 286.46l2.300-3 2.300 3zM1462.98 288.06l2.300 3 2.300-3z" fill="#79b6ea"/></svg>
<div style="left:848.59px;top:335.25px;width:750.7px;height:1.3px;background:#e9ebee"></div>
<div style="left:848.37px;top:371.65px;width:750.7px;height:1.3px;background:#e9ebee"></div>
<div style="left:848.15px;top:407.86px;width:750.7px;height:1.3px;background:#e9ebee"></div>
<div style="left:847.94px;top:444.06px;width:750.7px;height:1.3px;background:#e9ebee"></div>
<span class="t" style="left:859.09px;top:310.45px;font-size:12px;line-height:12px;color:#4a4a4a;">1</span>
<svg width="1640" height="856"><g transform="translate(900.4,316.45) rotate(45)"><rect x="-5.200" y="-5.200" width="10.400" height="10.400" rx="2.300" fill="#f3a93c"/><rect x="-2.300" y="-2.800" width="4" height="4" rx="1.500" fill="#f9cf6a"/><path d="M-3.500 4.800H3" stroke="#fff" stroke-width=".8" opacity=".55"/></g></svg>
<span class="t" style="left:915.17px;top:304.24px;font-size:12px;line-height:12px;color:#4a4a4a;letter-spacing:0.31px;">Production Planning</span>
<span class="t" style="left:915.1px;top:316.74px;font-size:12px;line-height:12px;color:#4a4a4a;letter-spacing:0.62px;">&amp; Scheduling</span>
<span class="t" style="left:1063.14px;top:310.64px;font-size:12px;line-height:12px;color:#4a4a4a;letter-spacing:0.07px;">Weekly</span>
<div style="left:1185.16px;top:306.66px;width:68.2px;height:19.6px;background:#e4e4e4;border-radius:10px;box-shadow:0 1px 1.5px rgba(0,0,0,.12)"></div>
<span class="t" style="left:1196.84px;top:310.5px;font-size:12px;line-height:12px;color:#3c3c3c;font-weight:700;letter-spacing:0.14px;">Hendrix</span>
<div style="left:1260.16px;top:306.66px;width:41.5px;height:19.6px;background:#e4e4e4;border-radius:10px;box-shadow:0 1px 1.5px rgba(0,0,0,.12)"></div>
<span class="t" style="left:1269.34px;top:310.64px;font-size:11.75px;line-height:11.75px;color:#3c3c3c;font-weight:700;letter-spacing:-0.21px;">Sam</span>
<span class="t" style="left:1336.64px;top:310.74px;font-size:12px;line-height:12px;color:#4a4a4a;letter-spacing:0.33px;">12/04/2025</span>
<svg width="1640" height="856"><g transform="translate(1441.9,317.05)"><circle r="12" fill="#22a5ae" stroke="#1f8f9c" stroke-width="1.500"/><path d="M0 0V-12A12 12 0 0 0 -12 0z" fill="#f4fbfd"/><path d="M-12 0H12M0 -12V12" stroke="#1d6f8f" stroke-width="1.500"/></g></svg>
<div style="left:1479.16px;top:306.16px;width:22.9px;height:21.3px;background:#e2f7f6;border:1.4px solid #86cbc2;border-radius:5px"><svg width="23" height="21" viewBox="0 0 23 21" style="left:-1.4px;top:-1.4px"><path d="M7.500 5.500h5.500l3 3v7.500h-8.500z" fill="none" stroke="#86cbc2" stroke-width="1.100"/><path d="M8.500 12.500h6" stroke="#86cbc2" stroke-width="2"/></svg></div>
<div style="left:1506.96px;top:306.16px;width:22.9px;height:21.3px;background:#dbe8fb;border:1.4px solid #7489bb;border-radius:5px"><svg width="23" height="21" viewBox="0 0 23 21" style="left:-1.4px;top:-1.4px"><path d="M5.500 10.500c3-5 9-5 12 0c-3 5-9 5-12 0z" fill="none" stroke="#7489bb" stroke-width="1.200"/><circle cx="11.500" cy="10.500" r="2.200" fill="none" stroke="#7489bb" stroke-width="1.200"/></svg></div>
<div style="left:1535.36px;top:306.16px;width:22.9px;height:21.3px;background:#d9f0fc;border:1.4px solid #74bfe2;border-radius:5px"><svg width="23" height="21" viewBox="0 0 23 21" style="left:-1.4px;top:-1.4px"><path d="M11 6.500H7.500v9h9V12" fill="none" stroke="#74bfe2" stroke-width="1.300"/><path d="M10.500 12.500l.4-2.200 5-5 1.700 1.700-5 5z" fill="none" stroke="#74bfe2" stroke-width="1.100"/></svg></div>
<div style="left:1563.36px;top:306.16px;width:22.9px;height:21.3px;background:#fbd7d7;border:1.4px solid #dd8d8d;border-radius:5px"><svg width="23" height="21" viewBox="0 0 23 21" style="left:-1.4px;top:-1.4px"><path d="M7 7.500h9M9.500 7.500v-1.500h4v1.500M8 7.500l.7 8h5.600l.7-8" fill="none" stroke="#dd8d8d" stroke-width="1.200"/><path d="M10.300 10v3.500M12.700 10v3.500" stroke="#dd8d8d" stroke-width="1"/></svg></div>
<span class="t" style="left:858.88px;top:346.75px;font-size:12px;line-height:12px;color:#4a4a4a;">2</span>
<svg width="1640" height="856"><g transform="translate(900.18,352.76) rotate(45)"><rect x="-5.200" y="-5.200" width="10.400" height="10.400" rx="2.300" fill="#f3a93c"/><rect x="-2.300" y="-2.800" width="4" height="4" rx="1.500" fill="#f9cf6a"/><path d="M-3.500 4.800H3" stroke="#fff" stroke-width=".8" opacity=".55"/></g></svg>
<span class="t" style="left:914.96px;top:340.54px;font-size:12px;line-height:12px;color:#4a4a4a;letter-spacing:0.41px;">Productivity</span>
<span class="t" style="left:914.88px;top:353.04px;font-size:12px;line-height:12px;color:#4a4a4a;letter-spacing:0.13px;">Assessment</span>
<span class="t" style="left:1062.92px;top:346.94px;font-size:12px;line-height:12px;color:#4a4a4a;letter-spacing:0.07px;">Weekly</span>
<div style="left:1184.94px;top:342.96px;width:50.5px;height:19.6px;background:#e4e4e4;border-radius:10px;box-shadow:0 1px 1.5px rgba(0,0,0,.12)"></div>
<span class="t" style="left:1194.12px;top:346.81px;font-size:12px;line-height:12px;color:#3c3c3c;font-weight:700;letter-spacing:-0.18px;">Olivia</span>
<span class="t" style="left:1336.42px;top:347.04px;font-size:12px;line-height:12px;color:#4a4a4a;letter-spacing:0.43px;">11/04/2025</span>
<svg width="1640" height="856"><g transform="translate(1441.68,353.35)"><circle r="12" fill="#fff" stroke="#2e6da4" stroke-width="1.500"/><path d="M0 0V-12A12 12 0 0 1 12 0z" fill="#f2a93b"/><path d="M-12 0H12M0 -12V12" stroke="#2e6da4" stroke-width="1.500"/></g></svg>
<div style="left:1478.95px;top:342.46px;width:22.9px;height:21.3px;background:#e2f7f6;border:1.4px solid #86cbc2;border-radius:5px"><svg width="23" height="21" viewBox="0 0 23 21" style="left:-1.4px;top:-1.4px"><path d="M7.500 5.500h5.500l3 3v7.500h-8.500z" fill="none" stroke="#86cbc2" stroke-width="1.100"/><path d="M8.500 12.500h6" stroke="#86cbc2" stroke-width="2"/></svg></div>
<div style="left:1506.75px;top:342.46px;width:22.9px;height:21.3px;background:#dbe8fb;border:1.4px solid #7489bb;border-radius:5px"><svg width="23" height="21" viewBox="0 0 23 21" style="left:-1.4px;top:-1.4px"><path d="M5.500 10.500c3-5 9-5 12 0c-3 5-9 5-12 0z" fill="none" stroke="#7489bb" stroke-width="1.200"/><circle cx="11.500" cy="10.500" r="2.200" fill="none" stroke="#7489bb" stroke-width="1.200"/></svg></div>
<div style="left:1535.15px;top:342.46px;width:22.9px;height:21.3px;background:#d9f0fc;border:1.4px solid #74bfe2;border-radius:5px"><svg width="23" height="21" viewBox="0 0 23 21" style="left:-1.4px;top:-1.4px"><path d="M11 6.500H7.500v9h9V12" fill="none" stroke="#74bfe2" stroke-width="1.300"/><path d="M10.500 12.500l.4-2.200 5-5 1.700 1.700-5 5z" fill="none" stroke="#74bfe2" stroke-width="1.100"/></svg></div>
<div style="left:1563.15px;top:342.46px;width:22.9px;height:21.3px;background:#fbd7d7;border:1.4px solid #dd8d8d;border-radius:5px"><svg width="23" height="21" viewBox="0 0 23 21" style="left:-1.4px;top:-1.4px"><path d="M7 7.500h9M9.500 7.500v-1.500h4v1.500M8 7.500l.7 8h5.600l.7-8" fill="none" stroke="#dd8d8d" stroke-width="1.200"/><path d="M10.300 10v3.500M12.700 10v3.500" stroke="#dd8d8d" stroke-width="1"/></svg></div>
<span class="t" style="left:858.66px;top:383.05px;font-size:12px;line-height:12px;color:#4a4a4a;">3</span>
<svg width="1640" height="856"><g transform="translate(899.97,389.06) rotate(45)"><rect x="-5.200" y="-5.200" width="10.400" height="10.400" rx="2.300" fill="#f3a93c"/><rect x="-2.300" y="-2.800" width="4" height="4" rx="1.500" fill="#f9cf6a"/><path d="M-3.500 4.800H3" stroke="#fff" stroke-width=".8" opacity=".55"/></g></svg>
<span class="t" style="left:915px;top:383.24px;font-size:12px;line-height:12px;color:#4a4a4a;letter-spacing:0.1px;">Safety Assessment</span>
<span class="t" style="left:1062.7px;top:383.24px;font-size:12px;line-height:12px;color:#4a4a4a;letter-spacing:0.21px;">Daily</span>
<div style="left:1185.22px;top:379.26px;width:51px;height:19.6px;background:#e4e4e4;border-radius:10px;box-shadow:0 1px 1.5px rgba(0,0,0,.12)"></div>
<span class="t" style="left:1195.2px;top:383.11px;font-size:12px;line-height:12px;color:#3c3c3c;font-weight:700;letter-spacing:-0.21px;">Sarah</span>
<span class="t" style="left:1336.2px;top:383.34px;font-size:12px;line-height:12px;color:#4a4a4a;letter-spacing:0.33px;">10/04/2025</span>
<svg width="1640" height="856"><g transform="translate(1441.46,389.65)"><circle r="12" fill="#fff" stroke="#2e6da4" stroke-width="1.500"/><path d="M0 0V-12A12 12 0 0 1 12 0z" fill="#f2a93b"/><path d="M-12 0H12M0 -12V12" stroke="#2e6da4" stroke-width="1.500"/></g></svg>
<div style="left:1478.73px;top:378.76px;width:22.9px;height:21.3px;background:#e2f7f6;border:1.4px solid #86cbc2;border-radius:5px"><svg width="23" height="21" viewBox="0 0 23 21" style="left:-1.4px;top:-1.4px"><path d="M7.500 5.500h5.500l3 3v7.500h-8.500z" fill="none" stroke="#86cbc2" stroke-width="1.100"/><path d="M8.500 12.500h6" stroke="#86cbc2" stroke-width="2"/></svg></div>
<div style="left:1506.53px;top:378.76px;width:22.9px;height:21.3px;background:#dbe8fb;border:1.4px solid #7489bb;border-radius:5px"><svg width="23" height="21" viewBox="0 0 23 21" style="left:-1.4px;top:-1.4px"><path d="M5.500 10.500c3-5 9-5 12 0c-3 5-9 5-12 0z" fill="none" stroke="#7489bb" stroke-width="1.200"/><circle cx="11.500" cy="10.500" r="2.200" fill="none" stroke="#7489bb" stroke-width="1.200"/></svg></div>
<div style="left:1534.93px;top:378.76px;width:22.9px;height:21.3px;background:#d9f0fc;border:1.4px solid #74bfe2;border-radius:5px"><svg width="23" height="21" viewBox="0 0 23 21" style="left:-1.4px;top:-1.4px"><path d="M11 6.500H7.500v9h9V12" fill="none" stroke="#74bfe2" stroke-width="1.300"/><path d="M10.500 12.500l.4-2.200 5-5 1.700 1.700-5 5z" fill="none" stroke="#74bfe2" stroke-width="1.100"/></svg></div>
<div style="left:1562.93px;top:378.76px;width:22.9px;height:21.3px;background:#fbd7d7;border:1.4px solid #dd8d8d;border-radius:5px"><svg width="23" height="21" viewBox="0 0 23 21" style="left:-1.4px;top:-1.4px"><path d="M7 7.500h9M9.500 7.500v-1.500h4v1.500M8 7.500l.7 8h5.600l.7-8" fill="none" stroke="#dd8d8d" stroke-width="1.200"/><path d="M10.300 10v3.500M12.700 10v3.500" stroke="#dd8d8d" stroke-width="1"/></svg></div>
<span class="t" style="left:858.44px;top:419.25px;font-size:12px;line-height:12px;color:#4a4a4a;">4</span>
<svg width="1640" height="856"><g transform="translate(899.75,425.26) rotate(45)"><rect x="-5.200" y="-5.200" width="10.400" height="10.400" rx="2.300" fill="#1b95ea"/><rect x="-2.300" y="-2.800" width="4" height="4" rx="1.500" fill="#7cc6f5"/><path d="M-3.500 4.800H3" stroke="#fff" stroke-width=".8" opacity=".55"/></g></svg>
<span class="t" style="left:914.78px;top:419.44px;font-size:12px;line-height:12px;color:#4a4a4a;letter-spacing:0.38px;">Downtime Reduction</span>
<span class="t" style="left:1062.48px;top:419.44px;font-size:12px;line-height:12px;color:#4a4a4a;letter-spacing:0.74px;">Monthly</span>
<div style="left:1185.01px;top:415.46px;width:60px;height:19.6px;background:#e4e4e4;border-radius:10px;box-shadow:0 1px 1.5px rgba(0,0,0,.12)"></div>
<span class="t" style="left:1194.98px;top:419.31px;font-size:12px;line-height:12px;color:#3c3c3c;font-weight:700;letter-spacing:0.1px;">William</span>
<span class="t" style="left:1335.98px;top:419.54px;font-size:12px;line-height:12px;color:#4a4a4a;letter-spacing:0.33px;">09/04/2025</span>
<svg width="1640" height="856"><g transform="translate(1441.24,425.86)"><circle r="12" fill="#43a73a" stroke="#3a9433" stroke-width="1.500"/><path d="M-12 0H12M0 -12V12" stroke="#2d7a3c" stroke-width="1.500"/></g></svg>
<div style="left:1478.51px;top:414.96px;width:22.9px;height:21.3px;background:#e2f7f6;border:1.4px solid #86cbc2;border-radius:5px"><svg width="23" height="21" viewBox="0 0 23 21" style="left:-1.4px;top:-1.4px"><path d="M7.500 5.500h5.500l3 3v7.500h-8.500z" fill="none" stroke="#86cbc2" stroke-width="1.100"/><path d="M8.500 12.500h6" stroke="#86cbc2" stroke-width="2"/></svg></div>
<div style="left:1506.31px;top:414.96px;width:22.9px;height:21.3px;background:#dbe8fb;border:1.4px solid #7489bb;border-radius:5px"><svg width="23" height="21" viewBox="0 0 23 21" style="left:-1.4px;top:-1.4px"><path d="M5.500 10.500c3-5 9-5 12 0c-3 5-9 5-12 0z" fill="none" stroke="#7489bb" stroke-width="1.200"/><circle cx="11.500" cy="10.500" r="2.200" fill="none" stroke="#7489bb" stroke-width="1.200"/></svg></div>
<div style="left:1534.71px;top:414.96px;width:22.9px;height:21.3px;background:#d9f0fc;border:1.4px solid #74bfe2;border-radius:5px"><svg width="23" height="21" viewBox="0 0 23 21" style="left:-1.4px;top:-1.4px"><path d="M11 6.500H7.500v9h9V12" fill="none" stroke="#74bfe2" stroke-width="1.300"/><path d="M10.500 12.500l.4-2.200 5-5 1.700 1.700-5 5z" fill="none" stroke="#74bfe2" stroke-width="1.100"/></svg></div>
<div style="left:1562.71px;top:414.96px;width:22.9px;height:21.3px;background:#fbd7d7;border:1.4px solid #dd8d8d;border-radius:5px"><svg width="23" height="21" viewBox="0 0 23 21" style="left:-1.4px;top:-1.4px"><path d="M7 7.500h9M9.500 7.500v-1.500h4v1.500M8 7.500l.7 8h5.600l.7-8" fill="none" stroke="#dd8d8d" stroke-width="1.200"/><path d="M10.300 10v3.500M12.700 10v3.500" stroke="#dd8d8d" stroke-width="1"/></svg></div>
<span class="t" style="left:859.3px;top:450.31px;font-size:9px;line-height:9px;color:#aeaeae;letter-spacing:0.19px;">1 - 4 of 50 items</span>
<span class="t" style="left:1492.79px;top:449.71px;font-size:9px;line-height:9px;color:#aaa;">1</span>
<span class="t" style="left:1509.39px;top:449.66px;font-size:9px;line-height:9px;color:#aaa;">2</span>
<span class="t" style="left:1526.39px;top:449.61px;font-size:9px;line-height:9px;color:#aaa;">3</span>
<span class="t" style="left:1540.79px;top:451.06px;font-size:9px;line-height:9px;color:#bbb;">....</span>
<span class="t" style="left:1557.9px;top:449.51px;font-size:9px;line-height:9px;color:#aaa;">10</span>
<svg width="1640" height="856"><path d="M1480.57 450.96l-3.500 3.300 3.500 3.300" fill="none" stroke="#b5b5b5" stroke-width="1.300"/><path d="M1578.28 450.66l3.500 3.300 -3.500 3.300" fill="none" stroke="#555" stroke-width="1.400"/></svg>
<div class="card" style="left:26.39px;top:485.42px;width:788.2px;height:340.5px;"></div>
<span class="t" style="left:46.79px;top:501.89px;font-size:15.5px;line-height:15.5px;color:#222;font-weight:700;letter-spacing:0.05px;">Failure Reasons</span>
<div class="hl" style="left:27.82px;top:529.72px;width:786px;height:1.5px;"></div>
<div style="left:765.64px;top:493.3px;width:33.4px;height:30px;background:#1594ea;border-radius:5px;box-shadow:0 1px 2px rgba(0,0,0,.2)"><svg width="33" height="30" viewBox="0 0 33 30"><path d="M16.500 7.500v15M9 15h15" stroke="#fff" stroke-width="2.200" stroke-linecap="round"/></svg></div>
<div style="left:39.76px;top:540.18px;width:224.6px;height:27.3px;background:#fff;border:1.5px solid #e6e6e6;border-radius:7px"></div>
<span class="t" style="left:49.73px;top:545.73px;font-size:15px;line-height:15px;color:#d2d2d2;letter-spacing:0.23px;">Search Failure Reasons</span>
<svg width="1640" height="856"><circle cx="246.48" cy="552.36" r="6.800" fill="none" stroke="#8a8a8a" stroke-width="1.600"/><path d="M251.48 557.36l3.400 3.400" stroke="#8a8a8a" stroke-width="1.600" stroke-linecap="round"/></svg>
<div style="left:275.26px;top:540.17px;width:219.8px;height:27.6px;background:#fff;border:1.5px solid #e6e6e6;border-radius:7px"></div>
<span class="t" style="left:288.42px;top:546.21px;font-size:15px;line-height:15px;color:#d2d2d2;letter-spacing:0.17px;">Select Reason Type</span>
<svg width="1640" height="856"><path d="M470.98 550.77l5.500 5.200 5.500-5.200" fill="none" stroke="#222" stroke-width="2" stroke-linecap="round" stroke-linejoin="round"/></svg>
<div style="left:39.74px;top:576.08px;width:758.8px;height:237px;background:#fff;border-radius:9px 9px 9px 9px;overflow:hidden;box-shadow:0 0 0 1.2px #cfd3d8"><div style="left:0;top:0;width:758.8px;height:34px;background:#1564b4"></div><div style="left:0;top:34px;width:758.8px;height:32px;background:linear-gradient(90deg,#f6fafc,#fcfdfe 50%,#fff)"></div><div style="left:0;top:138.1px;width:758.8px;height:32.5px;background:linear-gradient(90deg,#f6fafc,#fcfdfe 50%,#fff)"></div><div style="left:0;top:206px;width:758.8px;height:31px;background:linear-gradient(90deg,#f6fafc,#fcfdfe 50%,#fff)"></div><div style="left:0;top:65.3px;width:758.8px;height:1.400px;background:#dcdfe3"></div><div style="left:0;top:101.8px;width:758.8px;height:1.400px;background:#dcdfe3"></div><div style="left:0;top:137.4px;width:758.8px;height:1.400px;background:#dcdfe3"></div><div style="left:0;top:169.9px;width:758.8px;height:1.400px;background:#dcdfe3"></div><div style="left:0;top:205.3px;width:758.8px;height:1.400px;background:#dcdfe3"></div><div style="left:256.4px;top:0;width:2px;height:34px;background:#4f9fe6"></div><div style="left:256.7px;top:34px;width:1.400px;height:237px;background:#d9dcdf"></div><div style="left:320.3px;top:0;width:2px;height:34px;background:#4f9fe6"></div><div style="left:320.6px;top:34px;width:1.400px;height:237px;background:#d9dcdf"></div><div style="left:384.2px;top:0;width:2px;height:34px;background:#4f9fe6"></div><div style="left:384.5px;top:34px;width:1.400px;height:237px;background:#d9dcdf"></div><div style="left:448.1px;top:0;width:2px;height:34px;background:#4f9fe6"></div><div style="left:448.4px;top:34px;width:1.400px;height:237px;background:#d9dcdf"></div><div style="left:512px;top:0;width:2px;height:34px;background:#4f9fe6"></div><div style="left:512.3px;top:34px;width:1.400px;height:237px;background:#d9dcdf"></div><div style="left:575.9px;top:0;width:2px;height:34px;background:#4f9fe6"></div><div style="left:576.2px;top:34px;width:1.400px;height:237px;background:#d9dcdf"></div><div style="left:639.8px;top:0;width:2px;height:34px;background:#4f9fe6"></div><div style="left:640.1px;top:34px;width:1.400px;height:237px;background:#d9dcdf"></div><div style="left:703.7px;top:0;width:2px;height:34px;background:#4f9fe6"></div><div style="left:704px;top:34px;width:1.400px;height:237px;background:#d9dcdf"></div><div style="left:262.9px;top:71.2px;width:54.400px;height:27px;background:#fff;border:1.5px solid #dedede;border-radius:6px;box-shadow:0 1px 1.500px rgba(0,0,0,.07)"></div><div style="left:326.8px;top:71.2px;width:54.400px;height:27px;background:#fff;border:1.5px solid #dedede;border-radius:6px;box-shadow:0 1px 1.500px rgba(0,0,0,.07)"></div><div style="left:390.7px;top:71.2px;width:54.400px;height:27px;background:#fff;border:1.5px solid #dedede;border-radius:6px;box-shadow:0 1px 1.500px rgba(0,0,0,.07)"></div><div style="left:454.6px;top:71.2px;width:54.400px;height:27px;background:#fff;border:1.5px solid #dedede;border-radius:6px;box-shadow:0 1px 1.500px rgba(0,0,0,.07)"></div><div style="left:518.5px;top:71.2px;width:54.400px;height:27px;background:#fff;border:1.5px solid #dedede;border-radius:6px;box-shadow:0 1px 1.500px rgba(0,0,0,.07)"></div><div style="left:582.4px;top:71.2px;width:54.400px;height:27px;background:#fff;border:1.5px solid #dedede;border-radius:6px;box-shadow:0 1px 1.500px rgba(0,0,0,.07)"></div><div style="left:646.3px;top:71.2px;width:54.400px;height:27px;background:#fff;border:1.5px solid #dedede;border-radius:6px;box-shadow:0 1px 1.500px rgba(0,0,0,.07)"></div><div style="left:710.2px;top:71.2px;width:54.400px;height:27px;background:#fff;border:1.5px solid #dedede;border-radius:6px;box-shadow:0 1px 1.500px rgba(0,0,0,.07)"></div><div style="left:262.9px;top:107.7px;width:54.400px;height:27px;background:#fff;border:1.5px solid #dedede;border-radius:6px;box-shadow:0 1px 1.500px rgba(0,0,0,.07)"></div><div style="left:326.8px;top:107.7px;width:54.400px;height:27px;background:#fff;border:1.5px solid #dedede;border-radius:6px;box-shadow:0 1px 1.500px rgba(0,0,0,.07)"></div><div style="left:390.7px;top:107.7px;width:54.400px;height:27px;background:#fff;border:1.5px solid #dedede;border-radius:6px;box-shadow:0 1px 1.500px rgba(0,0,0,.07)"></div><div style="left:454.6px;top:107.7px;width:54.400px;height:27px;background:#fff;border:1.5px solid #dedede;border-radius:6px;box-shadow:0 1px 1.500px rgba(0,0,0,.07)"></div><div style="left:518.5px;top:107.7px;width:54.400px;height:27px;background:#fff;border:1.5px solid #dedede;border-radius:6px;box-shadow:0 1px 1.500px rgba(0,0,0,.07)"></div><div style="left:582.4px;top:107.7px;width:54.400px;height:27px;background:#fff;border:1.5px solid #dedede;border-radius:6px;box-shadow:0 1px 1.500px rgba(0,0,0,.07)"></div><div style="left:646.3px;top:107.7px;width:54.400px;height:27px;background:#fff;border:1.5px solid #dedede;border-radius:6px;box-shadow:0 1px 1.500px rgba(0,0,0,.07)"></div><div style="left:710.2px;top:107.7px;width:54.400px;height:27px;background:#fff;border:1.5px solid #dedede;border-radius:6px;box-shadow:0 1px 1.500px rgba(0,0,0,.07)"></div><div style="left:262.9px;top:175.8px;width:54.400px;height:27px;background:#fff;border:1.5px solid #dedede;border-radius:6px;box-shadow:0 1px 1.500px rgba(0,0,0,.07)"></div><div style="left:326.8px;top:175.8px;width:54.400px;height:27px;background:#fff;border:1.5px solid #dedede;border-radius:6px;box-shadow:0 1px 1.500px rgba(0,0,0,.07)"></div><div style="left:390.7px;top:175.8px;width:54.400px;height:27px;background:#fff;border:1.5px solid #dedede;border-radius:6px;box-shadow:0 1px 1.500px rgba(0,0,0,.07)"></div><div style="left:454.6px;top:175.8px;width:54.400px;height:27px;background:#fff;border:1.5px solid #dedede;border-radius:6px;box-shadow:0 1px 1.500px rgba(0,0,0,.07)"></div><div style="left:518.5px;top:175.8px;width:54.400px;height:27px;background:#fff;border:1.5px solid #dedede;border-radius:6px;box-shadow:0 1px 1.500px rgba(0,0,0,.07)"></div><div style="left:582.4px;top:175.8px;width:54.400px;height:27px;background:#fff;border:1.5px solid #dedede;border-radius:6px;box-shadow:0 1px 1.500px rgba(0,0,0,.07)"></div><div style="left:646.3px;top:175.8px;width:54.400px;height:27px;background:#fff;border:1.5px solid #dedede;border-radius:6px;box-shadow:0 1px 1.500px rgba(0,0,0,.07)"></div><div style="left:710.2px;top:175.8px;width:54.400px;height:27px;background:#fff;border:1.5px solid #dedede;border-radius:6px;box-shadow:0 1px 1.500px rgba(0,0,0,.07)"></div></div>
<div style="left:488.54px;top:576.13px;width:65.8px;height:237.8px;border:3px solid #5fd2ef;border-radius:1px"></div>
<span class="t" style="left:47.18px;top:586.89px;font-size:12.5px;line-height:12.5px;color:#fff;font-weight:700;letter-spacing:-0.08px;">Reasons</span>
<span class="t" style="left:222.48px;top:587.06px;font-size:12.5px;line-height:12.5px;color:#fff;font-weight:700;letter-spacing:0.44px;">May 2025</span>
<span class="t" style="left:322.27px;top:587.13px;font-size:12.5px;line-height:12.5px;color:#fff;font-weight:700;">01</span>
<span class="t" style="left:321.65px;top:618.78px;font-size:14px;line-height:14px;color:#4a4a4a;">24</span>
<span class="t" style="left:321.02px;top:723.14px;font-size:14px;line-height:14px;color:#4a4a4a;">29</span>
<span class="t" style="left:320.62px;top:790.29px;font-size:14px;line-height:14px;color:#4a4a4a;">22</span>
<span class="t" style="left:321.84px;top:653.13px;font-size:14px;line-height:14px;color:#4a4a4a;">10</span>
<span class="t" style="left:321.63px;top:689.18px;font-size:14px;line-height:14px;color:#4a4a4a;">14</span>
<span class="t" style="left:321.22px;top:757.18px;font-size:14px;line-height:14px;color:#4a4a4a;">29</span>
<span class="t" style="left:386.17px;top:587.13px;font-size:12.5px;line-height:12.5px;color:#fff;font-weight:700;">02</span>
<span class="t" style="left:385.55px;top:618.78px;font-size:14px;line-height:14px;color:#4a4a4a;">30</span>
<span class="t" style="left:384.92px;top:723.14px;font-size:14px;line-height:14px;color:#4a4a4a;">20</span>
<span class="t" style="left:384.52px;top:790.29px;font-size:14px;line-height:14px;color:#4a4a4a;">22</span>
<span class="t" style="left:385.74px;top:653.13px;font-size:14px;line-height:14px;color:#4a4a4a;">20</span>
<span class="t" style="left:385.53px;top:689.18px;font-size:14px;line-height:14px;color:#4a4a4a;">10</span>
<span class="t" style="left:385.12px;top:757.18px;font-size:14px;line-height:14px;color:#4a4a4a;">20</span>
<span class="t" style="left:450.07px;top:587.13px;font-size:12.5px;line-height:12.5px;color:#fff;font-weight:700;">03</span>
<span class="t" style="left:449.45px;top:618.78px;font-size:14px;line-height:14px;color:#4a4a4a;">34</span>
<span class="t" style="left:448.82px;top:723.14px;font-size:14px;line-height:14px;color:#4a4a4a;">29</span>
<span class="t" style="left:448.42px;top:790.29px;font-size:14px;line-height:14px;color:#4a4a4a;">18</span>
<span class="t" style="left:449.64px;top:653.13px;font-size:14px;line-height:14px;color:#4a4a4a;">32</span>
<span class="t" style="left:449.43px;top:689.18px;font-size:14px;line-height:14px;color:#4a4a4a;">02</span>
<span class="t" style="left:449.02px;top:757.18px;font-size:14px;line-height:14px;color:#4a4a4a;">29</span>
<span class="t" style="left:513.97px;top:587.13px;font-size:12.5px;line-height:12.5px;color:#fff;font-weight:700;">04</span>
<span class="t" style="left:513.35px;top:618.78px;font-size:14px;line-height:14px;color:#4a4a4a;">34</span>
<span class="t" style="left:512.72px;top:723.14px;font-size:14px;line-height:14px;color:#4a4a4a;">29</span>
<span class="t" style="left:512.32px;top:790.29px;font-size:14px;line-height:14px;color:#4a4a4a;">22</span>
<span class="t" style="left:513.54px;top:653.13px;font-size:14px;line-height:14px;color:#4a4a4a;">30</span>
<span class="t" style="left:513.33px;top:689.18px;font-size:14px;line-height:14px;color:#4a4a4a;">04</span>
<span class="t" style="left:512.92px;top:757.18px;font-size:14px;line-height:14px;color:#4a4a4a;">29</span>
<span class="t" style="left:577.87px;top:587.13px;font-size:12.5px;line-height:12.5px;color:#fff;font-weight:700;">05</span>
<span class="t" style="left:577.25px;top:618.78px;font-size:14px;line-height:14px;color:#4a4a4a;">30</span>
<span class="t" style="left:576.62px;top:723.14px;font-size:14px;line-height:14px;color:#4a4a4a;">29</span>
<span class="t" style="left:576.22px;top:790.29px;font-size:14px;line-height:14px;color:#4a4a4a;">22</span>
<span class="t" style="left:577.44px;top:653.13px;font-size:14px;line-height:14px;color:#4a4a4a;">20</span>
<span class="t" style="left:577.23px;top:689.18px;font-size:14px;line-height:14px;color:#4a4a4a;">10</span>
<span class="t" style="left:576.82px;top:757.18px;font-size:14px;line-height:14px;color:#4a4a4a;">29</span>
<span class="t" style="left:641.77px;top:587.13px;font-size:12.5px;line-height:12.5px;color:#fff;font-weight:700;">06</span>
<span class="t" style="left:641.15px;top:618.78px;font-size:14px;line-height:14px;color:#4a4a4a;">34</span>
<span class="t" style="left:640.52px;top:723.14px;font-size:14px;line-height:14px;color:#4a4a4a;">10</span>
<span class="t" style="left:640.12px;top:790.29px;font-size:14px;line-height:14px;color:#4a4a4a;">18</span>
<span class="t" style="left:641.34px;top:653.13px;font-size:14px;line-height:14px;color:#4a4a4a;">24</span>
<span class="t" style="left:641.13px;top:689.18px;font-size:14px;line-height:14px;color:#4a4a4a;">10</span>
<span class="t" style="left:640.72px;top:757.18px;font-size:14px;line-height:14px;color:#4a4a4a;">10</span>
<span class="t" style="left:705.67px;top:587.13px;font-size:12.5px;line-height:12.5px;color:#fff;font-weight:700;">07</span>
<span class="t" style="left:705.05px;top:618.78px;font-size:14px;line-height:14px;color:#4a4a4a;">18</span>
<span class="t" style="left:704.42px;top:723.14px;font-size:14px;line-height:14px;color:#4a4a4a;">29</span>
<span class="t" style="left:704.02px;top:790.29px;font-size:14px;line-height:14px;color:#4a4a4a;">18</span>
<span class="t" style="left:705.24px;top:653.13px;font-size:14px;line-height:14px;color:#4a4a4a;">06</span>
<span class="t" style="left:705.03px;top:689.18px;font-size:14px;line-height:14px;color:#4a4a4a;">12</span>
<span class="t" style="left:704.62px;top:757.18px;font-size:14px;line-height:14px;color:#4a4a4a;">29</span>
<span class="t" style="left:770.82px;top:587.13px;font-size:12.5px;line-height:12.5px;color:#fff;font-weight:700;">08</span>
<span class="t" style="left:770.2px;top:618.78px;font-size:14px;line-height:14px;color:#4a4a4a;">34</span>
<span class="t" style="left:769.57px;top:723.14px;font-size:14px;line-height:14px;color:#4a4a4a;">29</span>
<span class="t" style="left:769.17px;top:790.29px;font-size:14px;line-height:14px;color:#4a4a4a;">22</span>
<span class="t" style="left:770.39px;top:653.13px;font-size:14px;line-height:14px;color:#4a4a4a;">29</span>
<span class="t" style="left:770.18px;top:689.18px;font-size:14px;line-height:14px;color:#4a4a4a;">05</span>
<span class="t" style="left:769.77px;top:757.18px;font-size:14px;line-height:14px;color:#4a4a4a;">29</span>
<div style="left:47.61px;top:615.76px;width:21.7px;height:21px;background:#eef3f6;border-radius:4px"></div>
<span class="t" style="left:79.28px;top:619.69px;font-size:12.5px;line-height:12.5px;color:#333;font-weight:700;letter-spacing:0.03px;">Engineering Rework</span>
<div style="left:46.98px;top:720.11px;width:21.7px;height:21px;background:#eef3f6;border-radius:4px"></div>
<span class="t" style="left:79.16px;top:724.04px;font-size:12.5px;line-height:12.5px;color:#333;font-weight:700;letter-spacing:-0.03px;">Sales Rework</span>
<div style="left:46.58px;top:787.26px;width:21.7px;height:21px;background:#eef3f6;border-radius:4px"></div>
<span class="t" style="left:79.25px;top:791.19px;font-size:12.5px;line-height:12.5px;color:#333;font-weight:700;letter-spacing:0.05px;">Mfg.Rework</span>
<span class="t" style="left:81.58px;top:653.79px;font-size:12px;line-height:12px;color:#555;letter-spacing:0.75px;">24-454 Mixer</span>
<span class="t" style="left:81.86px;top:689.84px;font-size:12px;line-height:12px;color:#555;letter-spacing:-0.23px;">24370PH1130</span>
<span class="t" style="left:81.95px;top:757.84px;font-size:12px;line-height:12px;color:#555;letter-spacing:0.52px;">458285-1-1</span>
<svg width="1640" height="856"><path d="M54.74 624.32l3.700 3.500 3.700-3.500" fill="none" stroke="#7fbbc6" stroke-width="1.300" stroke-linecap="round" stroke-linejoin="round"/><path d="M54.12 728.68l3.700 3.500 3.700-3.500" fill="none" stroke="#7fbbc6" stroke-width="1.300" stroke-linecap="round" stroke-linejoin="round"/><path d="M53.72 795.83l3.700 3.500 3.700-3.500" fill="none" stroke="#7fbbc6" stroke-width="1.300" stroke-linecap="round" stroke-linejoin="round"/><path d="M59.95,642.02 L59.93,711.32" stroke="#9aa0a6" stroke-width="1.600"/><path d="M59.94,660.12 L69.04,660.09M59.92,696.32 L69.02,696.29" stroke="#9aa0a6" stroke-width="1.400"/><path d="M59.82,746.62 L59.82,764.02 L68.92,763.99" stroke="#9aa0a6" stroke-width="1.500" fill="none"/></svg>
<div class="card" style="left:831.87px;top:487.5px;width:787.8px;height:341px;"></div>
<span class="t" style="left:852.29px;top:501.67px;font-size:15.5px;line-height:15.5px;color:#222;font-weight:700;letter-spacing:0.39px;">Pareto Chart</span>
<div class="hl" style="left:832.82px;top:530px;width:786px;height:1.5px;"></div>
<div style="left:1463.23px;top:494.41px;width:143.1px;height:28.4px;background:#fff;border:1.5px solid #e4e4e4;border-radius:7px"></div>
<span class="t" style="left:1472.99px;top:502.06px;font-size:15px;line-height:15px;color:#cfcfcf;letter-spacing:-0.02px;">DD/MM/YYYY</span>
<svg width="1640" height="856"><g transform="translate(1589.95,508.83) scale(0.95)" fill="none" stroke="#383838" stroke-width="1.600"><rect x="-8.500" y="-7" width="17" height="16" rx="2.500"/><path d="M-8.500 -2.500h17" stroke-width="1.8"/><path d="M-4.500 -9.500v4M4.500 -9.500v4" stroke-linecap="round"/><g stroke="none" fill="#383838"><rect x="-5.500" y="0" width="2.400" height="2.200"/><rect x="-1.200" y="0" width="2.400" height="2.200"/><rect x="3.100" y="0" width="2.400" height="2.200"/><rect x="-5.500" y="4" width="2.400" height="2.200"/><rect x="-1.200" y="4" width="2.400" height="2.200"/><rect x="3.100" y="4" width="2.400" height="2.200"/></g></g></svg>
<svg width="1640" height="856"><path d="M893.52,747.12 L1551.02,746.82" stroke="#e4e4e4" stroke-width="1.200"/><path d="M893.75,708.82 L1551.25,708.52" stroke="#e4e4e4" stroke-width="1.200"/><path d="M893.98,670.52 L1551.48,670.22" stroke="#e4e4e4" stroke-width="1.200"/><path d="M894.21,632.22 L1551.71,631.92" stroke="#e4e4e4" stroke-width="1.200"/><path d="M894.44,593.92 L1551.94,593.62" stroke="#e4e4e4" stroke-width="1.200"/><path d="M894.67,555.62 L1552.17,555.32" stroke="#e4e4e4" stroke-width="1.200"/><defs><linearGradient id="bg1" x1="0" y1="0" x2="0" y2="1"><stop offset="0" stop-color="#9ad6f8"/><stop offset="1" stop-color="#8fd0f6"/></linearGradient></defs><path d="M913.91,614.59 L939.41,614.59 L938.62,747.11 L913.12,747.11z" fill="url(#bg1)"/><path d="M988.49,643.67 L1013.99,643.67 L1013.37,747.08 L987.87,747.08z" fill="url(#bg1)"/><path d="M1063.13,661.63 L1088.63,661.63 L1088.12,747.04 L1062.62,747.04z" fill="url(#bg1)"/><path d="M1137.8,675 L1163.3,675 L1162.87,747.01 L1137.37,747.01z" fill="url(#bg1)"/><path d="M1212.55,674.97 L1238.05,674.97 L1237.62,746.98 L1212.12,746.98z" fill="url(#bg1)"/><path d="M1287.17,696.39 L1312.67,696.39 L1312.37,746.94 L1286.87,746.94z" fill="url(#bg1)"/><path d="M1361.79,718.57 L1387.29,718.57 L1387.12,746.91 L1361.62,746.91z" fill="url(#bg1)"/><path d="M1436.54,718.53 L1462.04,718.53 L1461.87,746.88 L1436.37,746.88z" fill="url(#bg1)"/><path d="M1511.29,718.5 L1536.79,718.5 L1536.62,746.84 L1511.12,746.84z" fill="url(#bg1)"/><path d="M926.49,668.02 L1000.99,668.3 L1075.66,656.27 L1150.63,645.25 L1225.7,633.12 L1300.44,627.3 L1374.58,620.18 L1449.31,614.85 L1524.35,608.63 L1552.66,606.54" fill="none" stroke="#f2a93b" stroke-width="2.200" stroke-linejoin="round"/><circle cx="926.49" cy="668.02" r="3.400" fill="#f2a93b"/><circle cx="1000.99" cy="668.3" r="3.400" fill="#f2a93b"/><circle cx="1075.66" cy="656.27" r="3.400" fill="#f2a93b"/><circle cx="1150.63" cy="645.25" r="3.400" fill="#f2a93b"/><circle cx="1225.7" cy="633.12" r="3.400" fill="#f2a93b"/><circle cx="1300.44" cy="627.3" r="3.400" fill="#f2a93b"/><circle cx="1374.58" cy="620.18" r="3.400" fill="#f2a93b"/><circle cx="1449.31" cy="614.85" r="3.400" fill="#f2a93b"/><circle cx="1524.35" cy="608.63" r="3.400" fill="#f2a93b"/><circle cx="926.49" cy="668.02" r="4.300" fill="none" stroke="#fbe3b5" stroke-width="1"/><circle cx="1000.99" cy="668.3" r="4.300" fill="none" stroke="#fbe3b5" stroke-width="1"/><rect x="1165.85" y="804.99" width="6.600" height="6.600" rx="1.500" fill="#9ad6f8"/><circle cx="1213.55" cy="808.36" r="3.500" fill="#f2a93b"/></svg>
<span class="t" style="left:875.94px;top:739.07px;font-size:10.5px;line-height:10.5px;color:#555;">0</span>
<span class="t" style="left:873.25px;top:700.78px;font-size:10.5px;line-height:10.5px;color:#555;">10</span>
<span class="t" style="left:873.48px;top:662.48px;font-size:10.5px;line-height:10.5px;color:#555;">20</span>
<span class="t" style="left:873.71px;top:624.17px;font-size:10.5px;line-height:10.5px;color:#555;">30</span>
<span class="t" style="left:873.94px;top:585.87px;font-size:10.5px;line-height:10.5px;color:#555;">40</span>
<span class="t" style="left:874.17px;top:547.57px;font-size:10.5px;line-height:10.5px;color:#555;">50</span>
<span class="t" style="left:1560.65px;top:738.57px;font-size:10.5px;line-height:10.5px;color:#555;">0</span>
<span class="t" style="left:1557.95px;top:700.28px;font-size:10.5px;line-height:10.5px;color:#555;">20</span>
<span class="t" style="left:1558.18px;top:661.98px;font-size:10.5px;line-height:10.5px;color:#555;">40</span>
<span class="t" style="left:1558.41px;top:623.68px;font-size:10.5px;line-height:10.5px;color:#555;">60</span>
<span class="t" style="left:1558.64px;top:585.37px;font-size:10.5px;line-height:10.5px;color:#555;">80</span>
<span class="t" style="left:1559.45px;top:547.07px;font-size:10.5px;line-height:10.5px;color:#555;">100</span>
<span class="t" style="left:860.1px;top:649.42px;font-size:9.500px;line-height:10px;color:#9a9a9a;transform:translate(-50%,-50%) rotate(-90deg)">Frequency</span>
<span class="t" style="left:1587.55px;top:658.24px;font-size:9.500px;line-height:10px;color:#9a9a9a;transform:translate(-50%,-50%) rotate(-90deg)">Cumulative %</span>
<span class="t" style="left:897.81px;top:752.64px;font-size:10.5px;line-height:10.5px;color:#666;">Engineering</span>
<span class="t" style="left:907.96px;top:765.61px;font-size:10.5px;line-height:10.5px;color:#666;">Rework</span>
<span class="t" style="left:987.45px;top:752.6px;font-size:10.5px;line-height:10.5px;color:#666;">Sales</span>
<span class="t" style="left:982.71px;top:765.61px;font-size:10.5px;line-height:10.5px;color:#666;">Rework</span>
<span class="t" style="left:1065.12px;top:752.59px;font-size:10.5px;line-height:10.5px;color:#666;">Mfg.</span>
<span class="t" style="left:1057.46px;top:765.61px;font-size:10.5px;line-height:10.5px;color:#666;">Rework</span>
<span class="t" style="left:1130.82px;top:752.62px;font-size:10.5px;line-height:10.5px;color:#666;">Supplier</span>
<span class="t" style="left:1134.83px;top:765.6px;font-size:10.5px;line-height:10.5px;color:#666;">Issues</span>
<span class="t" style="left:1184.94px;top:752.68px;font-size:10.5px;line-height:10.5px;color:#666;">Overproduction</span>
<span class="t" style="left:1283.24px;top:752.61px;font-size:10.5px;line-height:10.5px;color:#666;">Design</span>
<span class="t" style="left:1284.33px;top:765.6px;font-size:10.5px;line-height:10.5px;color:#666;">Issues</span>
<span class="t" style="left:1356.53px;top:752.61px;font-size:10.5px;line-height:10.5px;color:#666;">Defects</span>
<span class="t" style="left:1431.77px;top:752.61px;font-size:10.5px;line-height:10.5px;color:#666;">Waiting</span>
<span class="t" style="left:1508.08px;top:752.61px;font-size:10.5px;line-height:10.5px;color:#666;">Motion</span>
<span class="t" style="left:1212.85px;top:782.55px;font-size:10px;line-height:10px;color:#999;">Cause</span>
<span class="t" style="left:1176.68px;top:803.96px;font-size:9px;line-height:9px;color:#a8a8a8;letter-spacing:0.33px;">Goal</span>
<span class="t" style="left:1221.98px;top:804.12px;font-size:9px;line-height:9px;color:#a8a8a8;letter-spacing:0.33px;">Cumulative %</span>
</div>
<div id="ov">
<div style="left:1541.5px;top:852.6px;width:33.5px;height:8px;background:#2d9a3c;border-radius:4px"></div>
<div style="left:1584.5px;top:852.6px;width:32.5px;height:8px;background:#123b7a;border-radius:4px"></div>
<div style="left:-26px;top:284.5px;width:139px;height:134px;border-radius:50%;background:radial-gradient(circle at 45% 30%,#3ac795 0,#27b585 45%,#159a6d 100%);box-shadow:0 4px 14px rgba(20,120,90,.45),0 0 26px rgba(60,190,140,.35)"></div>
<svg width="1640" height="856"><g transform="translate(40.700,351.300)" fill="none" stroke="#fff" stroke-width="3.900" stroke-linecap="round" stroke-linejoin="round"><path d="M-4.34 -18.81 A19.3 19.3 0 0 1 4.34 -18.81 L4.18 -13.68 A14.3 14.3 0 0 1 9.75 -10.46 L14.12 -13.16 A19.3 19.3 0 0 1 18.46 -5.64 L13.93 -3.22 A14.3 14.3 0 0 1 13.93 3.22 L18.46 5.64 A19.3 19.3 0 0 1 14.12 13.16 L9.75 10.46 A14.3 14.3 0 0 1 4.18 13.68 L4.34 18.81 A19.3 19.3 0 0 1 -4.34 18.81 L-4.18 13.68 A14.3 14.3 0 0 1 -9.75 10.46 L-14.12 13.16 A19.3 19.3 0 0 1 -18.46 5.64 L-13.93 3.22 A14.3 14.3 0 0 1 -13.93 -3.22 L-18.46 -5.64 A19.3 19.3 0 0 1 -14.12 -13.16 L-9.75 -10.46 A14.3 14.3 0 0 1 -4.18 -13.68z"/><circle r="6.600"/><circle cx="0" cy="-31.7" r="6.900"/><circle cx="34.7" cy="0" r="6.900"/><circle cx="0" cy="31.7" r="6.900"/><circle cx="-34" cy="0" r="6.900"/><path d="M13.42 -28.64A33 33 0 0 1 29.66 -13.74"/><path d="M21.58 -16.39L29.66 -13.74L32.54 -21.74"/><path d="M30.15 12.75A33 33 0 0 1 14.47 28.18"/><path d="M17.12 20.10L14.47 28.18L22.46 31.06"/><path d="M-13.42 28.64A33 33 0 0 1 -29.66 13.74"/><path d="M-21.58 16.39L-29.66 13.74L-32.54 21.74"/><path d="M-30.15 -12.75A33 33 0 0 1 -14.47 -28.18"/><path d="M-17.12 -20.10L-14.47 -28.18L-22.46 -31.06"/></g></svg>
<div style="left:1315.6px;top:736.8px;width:225.200px;height:230px;border-radius:45px;background:#e6f4fd;box-shadow:0 0 30px 14px rgba(150,165,190,.32),0 0 6px rgba(120,140,170,.3)"></div>
<svg width="1640" height="856" style="top:1px"><g fill="none" stroke="#289ee6" stroke-width="4.800"><path d="M1421 803.500V794a7 7 0 0 0-7-7H1376.600a7 7 0 0 0-7 7V827a7 7 0 0 0 7 7H1397"/><path d="M1437.400 803.500V794a7 7 0 0 1 7-7H1481.200a7 7 0 0 1 7 7V827a7 7 0 0 1-7 7H1460"/><path d="M1397 848.800H1376.600a7 7 0 0 0-7 7V870"/><path d="M1460 848.800H1481.200a7 7 0 0 1 7 7V870"/></g><path d="M1412 870V826a6 6 0 0 1 6-6H1438.500a6 6 0 0 1 6 6V870" fill="none" stroke="#289ee6" stroke-width="10"/><path d="M1432 845l14 14" stroke="#289ee6" stroke-width="7"/></svg>
</div>
</body></html>
